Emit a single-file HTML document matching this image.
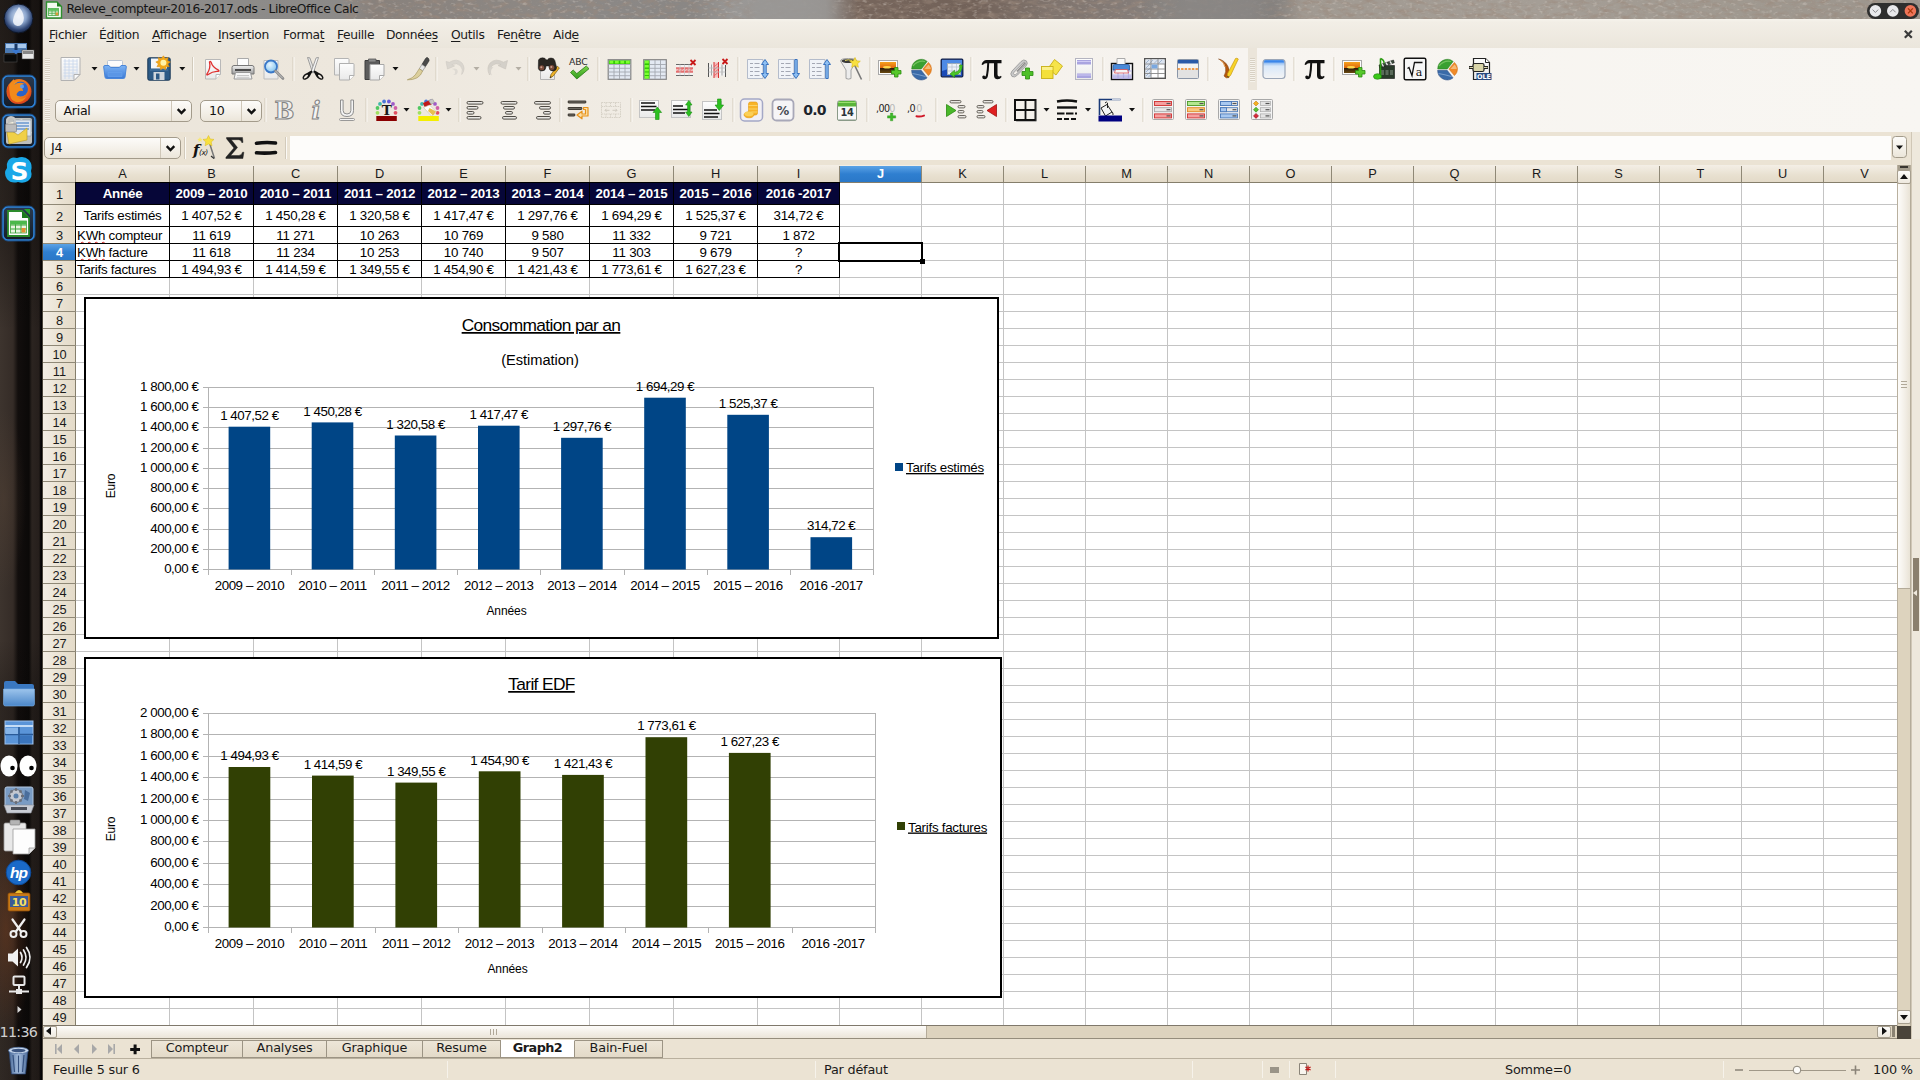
<!DOCTYPE html>
<html lang="fr"><head><meta charset="utf-8"><title>Releve_compteur-2016-2017.ods - LibreOffice Calc</title>
<style>
*{box-sizing:border-box;margin:0;padding:0}
html,body{width:1920px;height:1080px;overflow:hidden;background:#4a443a;}
body{position:relative;font-family:"DejaVu Sans","Liberation Sans",sans-serif;font-size:12px;color:#1a1a1a;}
.abs{position:absolute}
#dock{position:absolute;left:0;top:0;width:42px;border-right:0;height:1080px;background:linear-gradient(90deg,#2a211c 0,#1d1613 30px,#0a0807 36px,#050404 43px);}
#title{position:absolute;left:43px;top:0;width:1877px;height:19px;
 background:linear-gradient(90deg,#8f8d8b 0,#8c8a88 300px,#88817c 330px,#8c8783 470px,#8b8886 560px,#8a8785 650px,#9a9896 690px,#999795 760px,#77665c 800px,#726259 930px,#7f736c 1000px,#857d79 1090px,#86827f 1120px,#827e7b 1230px,#a19a92 1260px,#a59e96 1500px,#a09990 1700px,#9c958d 1877px);}
#title .t{position:absolute;left:23.5px;top:2px;font-size:12.3px;letter-spacing:-0.42px;color:#151515;white-space:nowrap}
#menubar{position:absolute;left:43px;top:19px;width:1877px;height:29px;background:linear-gradient(180deg,#f6f3ec 0,#f2eee6 3px,#ebe6dc 100%);}
#menubar span{position:absolute;top:9px;font-size:12.3px;letter-spacing:-0.35px;white-space:nowrap;color:#1a1a1a}
#menubar u{text-decoration:underline;text-underline-offset:1.5px;text-decoration-thickness:1px}
#tb{position:absolute;left:43px;top:48px;width:1877px;height:84px;background:linear-gradient(90deg,#ebe5da 0,#ede7dd 300px,#f2eee7 700px,#f7f4f0 1200px,#f8f6f2 1877px);}
#fbar{position:absolute;left:43px;top:132px;width:1877px;height:33px;background:#ebe3d4;}
.sep{position:absolute;width:1px;height:24px;background:#cfc7b8;box-shadow:1px 0 0 #faf8f4}
.dd{position:absolute;width:0;height:0;border-left:3.5px solid transparent;border-right:3.5px solid transparent;border-top:4px solid #1a1a1a}
.combo{position:absolute;height:25px;border:1px solid #a79f8f;border-radius:5px;background:linear-gradient(#fdfcfa,#f3efe7 60%,#ebe5d9);font-size:12.6px;letter-spacing:-0.3px;line-height:22px;padding-left:6px;color:#111}
.combo i{position:absolute;right:0;top:0;width:24px;height:23px;border-left:1px solid #cfc7b8}
.chev{position:absolute;width:7px;height:7px;border-right:2.6px solid #111;border-bottom:2.6px solid #111;transform:rotate(45deg)}


#grid{position:absolute;left:43px;top:165px;width:1854px;height:861px;background:#fff;overflow:hidden}
#grid .vl{position:absolute;top:0;width:1px;height:861px;background:#c4c4c4}
#grid .hl{position:absolute;left:0;height:1px;width:1854px;background:#c4c4c4}
#colhdr{position:absolute;left:0;top:0;width:1854px;height:18px;background:linear-gradient(#f4efe6,#e8e0d0 60%,#e3dac8);border-bottom:1px solid #857e6b}
#colhdr span{position:absolute;top:1px;height:16px;text-align:center;font-family:'Liberation Sans',sans-serif;font-size:12.8px;line-height:15px;color:#1a1a1a;border-right:1px solid #8f8876;}
#rowhdr{position:absolute;left:0;top:18px;width:33px;height:843px;background:linear-gradient(90deg,#f3eee4,#e9e1d1 60%,#e4dbc9);border-right:1px solid #857e6b}
#rowhdr span{position:absolute;left:0;width:33px;text-align:center;font-family:'Liberation Sans',sans-serif;font-size:12.8px;color:#1a1a1a;border-bottom:1px solid #8f8876;}
#corner{position:absolute;left:0;top:0;width:33px;height:18px;background:linear-gradient(#f4efe6,#e6decd);border-right:1px solid #9d9585;border-bottom:1px solid #9d9585}
.sel{background:linear-gradient(#5ba3e6,#2f7fd0 50%,#2a78c8)!important;color:#fff!important;font-weight:bold}
.c{position:absolute;font-family:"Liberation Sans",sans-serif;font-size:13.33px;letter-spacing:-0.25px;text-align:center;white-space:nowrap;color:#000;border:1px solid #000;overflow:hidden}
.c.h{background:#060638;color:#fff;font-weight:bold;letter-spacing:-0.2px}
.wavy{text-decoration:underline wavy #d02020;text-decoration-thickness:1px;text-underline-offset:1px;text-decoration-skip-ink:none}


#hsb{position:absolute;left:43px;top:1025px;width:1854px;height:14px;background:#ddd3be;border-top:1px solid #7f786b;border-bottom:1px solid #958d7c}
#hsb .th{position:absolute;left:14px;top:0;width:870px;height:12px;background:linear-gradient(#fdfcfa,#f3efe7 55%,#ebe5d9);border-right:1px solid #b4ab99}
#hsb .b{position:absolute;top:0px;width:14px;height:12px;border:1px solid #a69e8e;border-radius:2px;background:linear-gradient(#fdfcfa,#eee9de)}
.tri{position:absolute;width:0;height:0}
#vsb{position:absolute;left:1897px;top:165px;width:14px;height:861px;background:#ddd3be;border-left:1px solid #b9b09e;border-right:1px solid #b5ac9a}
#vsb .th{position:absolute;left:0;top:19px;width:12px;height:405px;background:linear-gradient(90deg,#fdfcfa,#f3efe7 55%,#e9e3d6);border-bottom:1px solid #b4ab99}
#vsb .b{position:absolute;left:-1px;width:14px;height:14px;border:1px solid #a69e8e;border-radius:2px;background:linear-gradient(#fdfcfa,#eee9de)}
#rpanel{position:absolute;left:1911px;top:132px;width:9px;height:927px;background:#eee8dc;border-left:1px solid #d0c7b6}
#tabbar{position:absolute;left:43px;top:1039px;width:1877px;height:20px;background:#ebe3d3;border-bottom:1px solid #b9b09e}
#tabbar .tab{position:absolute;top:1px;height:18px;border:1px solid #9c9484;border-left:none;background:linear-gradient(#ede6d8,#e3dac8);font-size:12.8px;letter-spacing:-0.15px;line-height:14px;text-align:center;color:#1a1a1a;white-space:nowrap}
#tabbar .tab.act{background:#fff;font-weight:bold;border-top-color:#fff;letter-spacing:-0.55px}
#tabbar .nav{position:absolute;top:3px;color:#a3a3a3;font-size:11px}
#status{position:absolute;left:43px;top:1059px;width:1877px;height:21px;background:#ebe3d3;font-size:12.8px;letter-spacing:-0.2px;color:#1a1a1a}
#status span{position:absolute;top:3px;white-space:nowrap}
#status .vs{position:absolute;top:2px;width:1px;height:17px;background:#f6f2ea}


#tbsvg{position:absolute;left:43px;top:48px}


#dock{background:radial-gradient(ellipse 26px 110px at 6px 930px,rgba(120,62,30,.5),rgba(120,62,30,0)),radial-gradient(ellipse 22px 90px at 4px 500px,rgba(90,70,55,.35),rgba(90,70,55,0)),linear-gradient(180deg,rgba(10,8,7,.55) 0,rgba(10,8,7,.35) 240px,rgba(0,0,0,0) 330px,rgba(0,0,0,0) 640px,rgba(10,8,7,.3) 700px,rgba(10,8,7,.25) 1080px),linear-gradient(90deg,#3d342e 0,#352c27 13px,#120e0d 18px,#0b0908 29px,#2b2420 32px,#261f1c 39px,#030202 41px,#000 43px)!important}
#docksvg{position:absolute;left:0;top:0}
</style></head>
<body>
<div id="dock"></div>
<div id="title"><svg class="abs" style="left:300px;top:0" width="1577" height="19" viewBox="0 0 1577 19" preserveAspectRatio="none"><filter id="tnoise" x="0" y="0" width="100%" height="100%"><feTurbulence type="fractalNoise" baseFrequency="0.09 0.22" numOctaves="3" seed="7"/><feColorMatrix type="matrix" values="0 0 0 0 0.33  0 0 0 0 0.25  0 0 0 0 0.2  2.4 0 0 0 -1.05"/></filter><filter id="tnoise2" x="0" y="0" width="100%" height="100%"><feTurbulence type="fractalNoise" baseFrequency="0.2 0.35" numOctaves="2" seed="23"/><feColorMatrix type="matrix" values="0 0 0 0 0.78  0 0 0 0 0.72  0 0 0 0 0.66  0 2.2 0 0 -1.25"/></filter><rect width="1577" height="19" filter="url(#tnoise)" opacity=".7"/><rect width="1577" height="19" filter="url(#tnoise2)" opacity=".5"/><defs><linearGradient id="tband" x1="0" y1="0" x2="1" y2="0"><stop offset="0" stop-color="#999795" stop-opacity="0"/><stop offset=".25" stop-color="#999795" stop-opacity=".9"/><stop offset=".75" stop-color="#999795" stop-opacity=".9"/><stop offset="1" stop-color="#999795" stop-opacity="0"/></linearGradient><linearGradient id="tband2" x1="0" y1="0" x2="1" y2="0"><stop offset="0" stop-color="#8a8785" stop-opacity="0"/><stop offset=".3" stop-color="#8a8785" stop-opacity=".85"/><stop offset=".7" stop-color="#8a8785" stop-opacity=".85"/><stop offset="1" stop-color="#8a8785" stop-opacity="0"/></linearGradient></defs><rect x="385" y="0" width="130" height="19" fill="url(#tband)"/><rect x="800" y="0" width="150" height="19" fill="url(#tband2)"/></svg><svg class="abs" style="left:2px;top:1px" width="18" height="18" viewBox="0 0 18 18"><path d="M1.500 1h10.500l4.500 4.500v11.500h-15z" fill="#f4faf0" stroke="#2f8f2f" stroke-width="1.400"/><path d="M12 1l4.500 4.500h-4.500z" fill="#1f7f1f"/><rect x="3.500" y="7.500" width="10" height="7" fill="#e6f4de" stroke="#48a848" stroke-width=".8"/><path d="M3.500 10h10M3.500 12.300h10M7 7.500v7M10.300 7.500v7" stroke="#48a848" stroke-width=".8"/><rect x="3.500" y="7.500" width="10" height="2.200" fill="#5cc05c"/><rect x="10.600" y="11.500" width="2.600" height="2.800" fill="#e09838"/></svg><div class="t">Releve_compteur-2016-2017.ods - LibreOffice Calc</div></div>
<div id="menubar"><span style="left:6px"><u>F</u>ichier</span><span style="left:56px">É<u>d</u>ition</span><span style="left:109px"><u>A</u>ffichage</span><span style="left:175px"><u>I</u>nsertion</span><span style="left:240px">Forma<u>t</u></span><span style="left:294px"><u>F</u>euille</span><span style="left:343px">Donnée<u>s</u></span><span style="left:408px"><u>O</u>utils</span><span style="left:454px">Fe<u>n</u>être</span><span style="left:510px">Aid<u>e</u></span><svg class="abs" style="left:1860px;top:10px" width="12" height="12" viewBox="0 0 12 12" aria-label="fermer"><path d="M1.800 1.800l7 7M8.800 1.800l-7 7" stroke="#3a3a3a" stroke-width="2.200"/></svg></div>
<svg class="abs" style="left:1864px;top:0" width="56" height="20" viewBox="1864 0 56 20"><rect x="1867" y="3" width="52" height="16" rx="8" fill="#2e2e2e"/><circle cx="1875.400" cy="10.900" r="5.800" fill="#e9e9ec"/><circle cx="1892.800" cy="10.900" r="5.800" fill="#e9e9ec"/><circle cx="1910.400" cy="10.900" r="5.800" fill="#ee7458"/><path d="M1872.600 9.600l2.800 2.900 2.800-2.900M1890 12.300l2.800-2.900 2.800 2.900" fill="none" stroke="#8a8a8e" stroke-width="1"/><path d="M1908 8.400l4.800 5M1912.800 8.400l-4.800 5" stroke="#a83408" stroke-width="1.300"/></svg>
<div id="tb"></div>
<div id="fbar"></div>
<div id="grid">
<div class="vl" style="left:126px"></div>
<div class="vl" style="left:210px"></div>
<div class="vl" style="left:294px"></div>
<div class="vl" style="left:378px"></div>
<div class="vl" style="left:462px"></div>
<div class="vl" style="left:546px"></div>
<div class="vl" style="left:630px"></div>
<div class="vl" style="left:714px"></div>
<div class="vl" style="left:796px"></div>
<div class="vl" style="left:878px"></div>
<div class="vl" style="left:960px"></div>
<div class="vl" style="left:1042px"></div>
<div class="vl" style="left:1124px"></div>
<div class="vl" style="left:1206px"></div>
<div class="vl" style="left:1288px"></div>
<div class="vl" style="left:1370px"></div>
<div class="vl" style="left:1452px"></div>
<div class="vl" style="left:1534px"></div>
<div class="vl" style="left:1616px"></div>
<div class="vl" style="left:1698px"></div>
<div class="vl" style="left:1780px"></div>
<div class="hl" style="top:39px"></div>
<div class="hl" style="top:61px"></div>
<div class="hl" style="top:78px"></div>
<div class="hl" style="top:95px"></div>
<div class="hl" style="top:112px"></div>
<div class="hl" style="top:129px"></div>
<div class="hl" style="top:146px"></div>
<div class="hl" style="top:163px"></div>
<div class="hl" style="top:180px"></div>
<div class="hl" style="top:197px"></div>
<div class="hl" style="top:214px"></div>
<div class="hl" style="top:231px"></div>
<div class="hl" style="top:248px"></div>
<div class="hl" style="top:265px"></div>
<div class="hl" style="top:282px"></div>
<div class="hl" style="top:299px"></div>
<div class="hl" style="top:316px"></div>
<div class="hl" style="top:333px"></div>
<div class="hl" style="top:350px"></div>
<div class="hl" style="top:367px"></div>
<div class="hl" style="top:384px"></div>
<div class="hl" style="top:401px"></div>
<div class="hl" style="top:418px"></div>
<div class="hl" style="top:435px"></div>
<div class="hl" style="top:452px"></div>
<div class="hl" style="top:469px"></div>
<div class="hl" style="top:486px"></div>
<div class="hl" style="top:503px"></div>
<div class="hl" style="top:520px"></div>
<div class="hl" style="top:537px"></div>
<div class="hl" style="top:554px"></div>
<div class="hl" style="top:571px"></div>
<div class="hl" style="top:588px"></div>
<div class="hl" style="top:605px"></div>
<div class="hl" style="top:622px"></div>
<div class="hl" style="top:639px"></div>
<div class="hl" style="top:656px"></div>
<div class="hl" style="top:673px"></div>
<div class="hl" style="top:690px"></div>
<div class="hl" style="top:707px"></div>
<div class="hl" style="top:724px"></div>
<div class="hl" style="top:741px"></div>
<div class="hl" style="top:758px"></div>
<div class="hl" style="top:775px"></div>
<div class="hl" style="top:792px"></div>
<div class="hl" style="top:809px"></div>
<div class="hl" style="top:826px"></div>
<div class="hl" style="top:843px"></div>
<div class="hl" style="top:860px"></div>
<div id="colhdr">
<span style="left:33px;width:94px">A</span>
<span style="left:127px;width:84px">B</span>
<span style="left:211px;width:84px">C</span>
<span style="left:295px;width:84px">D</span>
<span style="left:379px;width:84px">E</span>
<span style="left:463px;width:84px">F</span>
<span style="left:547px;width:84px">G</span>
<span style="left:631px;width:84px">H</span>
<span style="left:715px;width:82px">I</span>
<span class="sel" style="left:797px;width:82px">J</span>
<span style="left:879px;width:82px">K</span>
<span style="left:961px;width:82px">L</span>
<span style="left:1043px;width:82px">M</span>
<span style="left:1125px;width:82px">N</span>
<span style="left:1207px;width:82px">O</span>
<span style="left:1289px;width:82px">P</span>
<span style="left:1371px;width:82px">Q</span>
<span style="left:1453px;width:82px">R</span>
<span style="left:1535px;width:82px">S</span>
<span style="left:1617px;width:82px">T</span>
<span style="left:1699px;width:82px">U</span>
<span style="left:1781px;width:82px">V</span>
</div><div id="rowhdr">
<span style="top:0px;height:22px;line-height:23px">1</span>
<span style="top:22px;height:22px;line-height:23px">2</span>
<span style="top:44px;height:17px;line-height:18px">3</span>
<span class="sel" style="top:61px;height:17px;line-height:18px">4</span>
<span style="top:78px;height:17px;line-height:18px">5</span>
<span style="top:95px;height:17px;line-height:18px">6</span>
<span style="top:112px;height:17px;line-height:18px">7</span>
<span style="top:129px;height:17px;line-height:18px">8</span>
<span style="top:146px;height:17px;line-height:18px">9</span>
<span style="top:163px;height:17px;line-height:18px">10</span>
<span style="top:180px;height:17px;line-height:18px">11</span>
<span style="top:197px;height:17px;line-height:18px">12</span>
<span style="top:214px;height:17px;line-height:18px">13</span>
<span style="top:231px;height:17px;line-height:18px">14</span>
<span style="top:248px;height:17px;line-height:18px">15</span>
<span style="top:265px;height:17px;line-height:18px">16</span>
<span style="top:282px;height:17px;line-height:18px">17</span>
<span style="top:299px;height:17px;line-height:18px">18</span>
<span style="top:316px;height:17px;line-height:18px">19</span>
<span style="top:333px;height:17px;line-height:18px">20</span>
<span style="top:350px;height:17px;line-height:18px">21</span>
<span style="top:367px;height:17px;line-height:18px">22</span>
<span style="top:384px;height:17px;line-height:18px">23</span>
<span style="top:401px;height:17px;line-height:18px">24</span>
<span style="top:418px;height:17px;line-height:18px">25</span>
<span style="top:435px;height:17px;line-height:18px">26</span>
<span style="top:452px;height:17px;line-height:18px">27</span>
<span style="top:469px;height:17px;line-height:18px">28</span>
<span style="top:486px;height:17px;line-height:18px">29</span>
<span style="top:503px;height:17px;line-height:18px">30</span>
<span style="top:520px;height:17px;line-height:18px">31</span>
<span style="top:537px;height:17px;line-height:18px">32</span>
<span style="top:554px;height:17px;line-height:18px">33</span>
<span style="top:571px;height:17px;line-height:18px">34</span>
<span style="top:588px;height:17px;line-height:18px">35</span>
<span style="top:605px;height:17px;line-height:18px">36</span>
<span style="top:622px;height:17px;line-height:18px">37</span>
<span style="top:639px;height:17px;line-height:18px">38</span>
<span style="top:656px;height:17px;line-height:18px">39</span>
<span style="top:673px;height:17px;line-height:18px">40</span>
<span style="top:690px;height:17px;line-height:18px">41</span>
<span style="top:707px;height:17px;line-height:18px">42</span>
<span style="top:724px;height:17px;line-height:18px">43</span>
<span style="top:741px;height:17px;line-height:18px">44</span>
<span style="top:758px;height:17px;line-height:18px">45</span>
<span style="top:775px;height:17px;line-height:18px">46</span>
<span style="top:792px;height:17px;line-height:18px">47</span>
<span style="top:809px;height:17px;line-height:18px">48</span>
<span style="top:826px;height:17px;line-height:18px">49</span>
</div><div id="corner"></div>
<div class="c h" style="left:32px;top:17px;width:95px;height:23px;line-height:21px">Année</div>
<div class="c h" style="left:126px;top:17px;width:85px;height:23px;line-height:21px">2009 – 2010</div>
<div class="c h" style="left:210px;top:17px;width:85px;height:23px;line-height:21px">2010 – 2011</div>
<div class="c h" style="left:294px;top:17px;width:85px;height:23px;line-height:21px">2011 – 2012</div>
<div class="c h" style="left:378px;top:17px;width:85px;height:23px;line-height:21px">2012 – 2013</div>
<div class="c h" style="left:462px;top:17px;width:85px;height:23px;line-height:21px">2013 – 2014</div>
<div class="c h" style="left:546px;top:17px;width:85px;height:23px;line-height:21px">2014 – 2015</div>
<div class="c h" style="left:630px;top:17px;width:85px;height:23px;line-height:21px">2015 – 2016</div>
<div class="c h" style="left:714px;top:17px;width:83px;height:23px;line-height:21px">2016 -2017</div>
<div class="c" style="left:32px;top:39px;width:95px;height:23px;line-height:21px">Tarifs estimés</div>
<div class="c" style="left:126px;top:39px;width:85px;height:23px;line-height:21px">1 407,52 €</div>
<div class="c" style="left:210px;top:39px;width:85px;height:23px;line-height:21px">1 450,28 €</div>
<div class="c" style="left:294px;top:39px;width:85px;height:23px;line-height:21px">1 320,58 €</div>
<div class="c" style="left:378px;top:39px;width:85px;height:23px;line-height:21px">1 417,47 €</div>
<div class="c" style="left:462px;top:39px;width:85px;height:23px;line-height:21px">1 297,76 €</div>
<div class="c" style="left:546px;top:39px;width:85px;height:23px;line-height:21px">1 694,29 €</div>
<div class="c" style="left:630px;top:39px;width:85px;height:23px;line-height:21px">1 525,37 €</div>
<div class="c" style="left:714px;top:39px;width:83px;height:23px;line-height:21px">314,72 €</div>
<div class="c" style="left:32px;top:61px;width:95px;height:18px;line-height:18px;text-align:left;padding-left:1px"><span class="wavy">KWh</span> compteur</div>
<div class="c" style="left:126px;top:61px;width:85px;height:18px;line-height:18px">11 619</div>
<div class="c" style="left:210px;top:61px;width:85px;height:18px;line-height:18px">11 271</div>
<div class="c" style="left:294px;top:61px;width:85px;height:18px;line-height:18px">10 263</div>
<div class="c" style="left:378px;top:61px;width:85px;height:18px;line-height:18px">10 769</div>
<div class="c" style="left:462px;top:61px;width:85px;height:18px;line-height:18px">9 580</div>
<div class="c" style="left:546px;top:61px;width:85px;height:18px;line-height:18px">11 332</div>
<div class="c" style="left:630px;top:61px;width:85px;height:18px;line-height:18px">9 721</div>
<div class="c" style="left:714px;top:61px;width:83px;height:18px;line-height:18px">1 872</div>
<div class="c" style="left:32px;top:78px;width:95px;height:18px;line-height:18px;text-align:left;padding-left:1px"><span class="wavy">KWh</span> facture</div>
<div class="c" style="left:126px;top:78px;width:85px;height:18px;line-height:18px">11 618</div>
<div class="c" style="left:210px;top:78px;width:85px;height:18px;line-height:18px">11 234</div>
<div class="c" style="left:294px;top:78px;width:85px;height:18px;line-height:18px">10 253</div>
<div class="c" style="left:378px;top:78px;width:85px;height:18px;line-height:18px">10 740</div>
<div class="c" style="left:462px;top:78px;width:85px;height:18px;line-height:18px">9 507</div>
<div class="c" style="left:546px;top:78px;width:85px;height:18px;line-height:18px">11 303</div>
<div class="c" style="left:630px;top:78px;width:85px;height:18px;line-height:18px">9 679</div>
<div class="c" style="left:714px;top:78px;width:83px;height:18px;line-height:18px">?</div>
<div class="c" style="left:32px;top:95px;width:95px;height:18px;line-height:18px;text-align:left;padding-left:1px">Tarifs factures</div>
<div class="c" style="left:126px;top:95px;width:85px;height:18px;line-height:18px">1 494,93 €</div>
<div class="c" style="left:210px;top:95px;width:85px;height:18px;line-height:18px">1 414,59 €</div>
<div class="c" style="left:294px;top:95px;width:85px;height:18px;line-height:18px">1 349,55 €</div>
<div class="c" style="left:378px;top:95px;width:85px;height:18px;line-height:18px">1 454,90 €</div>
<div class="c" style="left:462px;top:95px;width:85px;height:18px;line-height:18px">1 421,43 €</div>
<div class="c" style="left:546px;top:95px;width:85px;height:18px;line-height:18px">1 773,61 €</div>
<div class="c" style="left:630px;top:95px;width:85px;height:18px;line-height:18px">1 627,23 €</div>
<div class="c" style="left:714px;top:95px;width:83px;height:18px;line-height:18px">?</div>
<div class="abs" style="left:795px;top:77px;width:85px;height:20px;border:2px solid #000"></div>
<div class="abs" style="left:877px;top:94px;width:5px;height:5px;background:#000"></div>
</div>
<svg class="abs" style="left:84px;top:297px" width="915" height="342" viewBox="84 297 915 342" font-family="Liberation Sans, sans-serif" fill="#000">
<rect x="85" y="298" width="913" height="340" fill="#fff" stroke="#000" stroke-width="2"/>
<path d="M203 569.5H873.5" stroke="#b3b3b3" stroke-width="1" fill="none"/>
<text x="198.5" y="573.3" font-size="13.33" text-anchor="end" letter-spacing="-0.45">0,00 €</text>
<path d="M203 549.5H873.5" stroke="#b3b3b3" stroke-width="1" fill="none"/>
<text x="198.5" y="553.3" font-size="13.33" text-anchor="end" letter-spacing="-0.45">200,00 €</text>
<path d="M203 529.5H873.5" stroke="#b3b3b3" stroke-width="1" fill="none"/>
<text x="198.5" y="533.3" font-size="13.33" text-anchor="end" letter-spacing="-0.45">400,00 €</text>
<path d="M203 508.5H873.5" stroke="#b3b3b3" stroke-width="1" fill="none"/>
<text x="198.5" y="512.3" font-size="13.33" text-anchor="end" letter-spacing="-0.45">600,00 €</text>
<path d="M203 488.5H873.5" stroke="#b3b3b3" stroke-width="1" fill="none"/>
<text x="198.5" y="492.3" font-size="13.33" text-anchor="end" letter-spacing="-0.45">800,00 €</text>
<path d="M203 468.5H873.5" stroke="#b3b3b3" stroke-width="1" fill="none"/>
<text x="198.5" y="472.3" font-size="13.33" text-anchor="end" letter-spacing="-0.45">1 000,00 €</text>
<path d="M203 448.5H873.5" stroke="#b3b3b3" stroke-width="1" fill="none"/>
<text x="198.5" y="452.3" font-size="13.33" text-anchor="end" letter-spacing="-0.45">1 200,00 €</text>
<path d="M203 427.5H873.5" stroke="#b3b3b3" stroke-width="1" fill="none"/>
<text x="198.5" y="431.3" font-size="13.33" text-anchor="end" letter-spacing="-0.45">1 400,00 €</text>
<path d="M203 407.5H873.5" stroke="#b3b3b3" stroke-width="1" fill="none"/>
<text x="198.5" y="411.3" font-size="13.33" text-anchor="end" letter-spacing="-0.45">1 600,00 €</text>
<path d="M203 387.5H873.5" stroke="#b3b3b3" stroke-width="1" fill="none"/>
<text x="198.5" y="391.3" font-size="13.33" text-anchor="end" letter-spacing="-0.45">1 800,00 €</text>
<path d="M208.5 387V575M873.5 387V575" stroke="#b3b3b3" fill="none"/>
<path d="M291.5 569v6" stroke="#b3b3b3" fill="none"/>
<path d="M374.5 569v6" stroke="#b3b3b3" fill="none"/>
<path d="M457.5 569v6" stroke="#b3b3b3" fill="none"/>
<path d="M540.5 569v6" stroke="#b3b3b3" fill="none"/>
<path d="M624.5 569v6" stroke="#b3b3b3" fill="none"/>
<path d="M707.5 569v6" stroke="#b3b3b3" fill="none"/>
<path d="M790.5 569v6" stroke="#b3b3b3" fill="none"/>
<rect x="228.6" y="426.7" width="41.6" height="142.8" fill="#004586"/>
<text x="249.4" y="419.9" font-size="13.33" text-anchor="middle" letter-spacing="-0.45">1 407,52 €</text>
<text x="249.4" y="590" font-size="13.33" text-anchor="middle" letter-spacing="-0.42">2009 – 2010</text>
<rect x="311.7" y="422.4" width="41.6" height="147.1" fill="#004586"/>
<text x="332.5" y="415.6" font-size="13.33" text-anchor="middle" letter-spacing="-0.45">1 450,28 €</text>
<text x="332.5" y="590" font-size="13.33" text-anchor="middle" letter-spacing="-0.42">2010 – 2011</text>
<rect x="394.8" y="435.5" width="41.6" height="134.0" fill="#004586"/>
<text x="415.6" y="428.7" font-size="13.33" text-anchor="middle" letter-spacing="-0.45">1 320,58 €</text>
<text x="415.6" y="590" font-size="13.33" text-anchor="middle" letter-spacing="-0.42">2011 – 2012</text>
<rect x="478.0" y="425.7" width="41.6" height="143.8" fill="#004586"/>
<text x="498.7" y="418.9" font-size="13.33" text-anchor="middle" letter-spacing="-0.45">1 417,47 €</text>
<text x="498.7" y="590" font-size="13.33" text-anchor="middle" letter-spacing="-0.42">2012 – 2013</text>
<rect x="561.1" y="437.8" width="41.6" height="131.7" fill="#004586"/>
<text x="581.9" y="431.0" font-size="13.33" text-anchor="middle" letter-spacing="-0.45">1 297,76 €</text>
<text x="581.9" y="590" font-size="13.33" text-anchor="middle" letter-spacing="-0.42">2013 – 2014</text>
<rect x="644.2" y="397.7" width="41.6" height="171.8" fill="#004586"/>
<text x="665.0" y="390.9" font-size="13.33" text-anchor="middle" letter-spacing="-0.45">1 694,29 €</text>
<text x="665.0" y="590" font-size="13.33" text-anchor="middle" letter-spacing="-0.42">2014 – 2015</text>
<rect x="727.3" y="414.8" width="41.6" height="154.7" fill="#004586"/>
<text x="748.1" y="408.0" font-size="13.33" text-anchor="middle" letter-spacing="-0.45">1 525,37 €</text>
<text x="748.1" y="590" font-size="13.33" text-anchor="middle" letter-spacing="-0.42">2015 – 2016</text>
<rect x="810.5" y="537.2" width="41.6" height="32.3" fill="#004586"/>
<text x="831.2" y="530.4" font-size="13.33" text-anchor="middle" letter-spacing="-0.45">314,72 €</text>
<text x="831.2" y="590" font-size="13.33" text-anchor="middle" letter-spacing="-0.42">2016 -2017</text>
<text x="541" y="331" font-size="17.33" text-anchor="middle" letter-spacing="-0.62" text-decoration="underline">Consommation par an</text>
<text x="540" y="365" font-size="14.67" text-anchor="middle" letter-spacing="-0.05">(Estimation)</text>
<text x="506.5" y="615" font-size="12" text-anchor="middle" letter-spacing="-0.1">Années</text>
<text transform="translate(115 486) rotate(-90)" font-size="12" text-anchor="middle" letter-spacing="-0.2">Euro</text>
<rect x="895" y="463" width="8" height="8" fill="#004586"/>
<text x="906" y="472" font-size="13.33" letter-spacing="-0.26" text-decoration="underline">Tarifs estimés</text>
</svg>
<svg class="abs" style="left:84px;top:657px" width="918" height="341" viewBox="84 657 918 341" font-family="Liberation Sans, sans-serif" fill="#000">
<rect x="85" y="658" width="916" height="339" fill="#fff" stroke="#000" stroke-width="2"/>
<path d="M203 927.5H875.5" stroke="#b3b3b3" stroke-width="1" fill="none"/>
<text x="198.5" y="931.3" font-size="13.33" text-anchor="end" letter-spacing="-0.45">0,00 €</text>
<path d="M203 906.5H875.5" stroke="#b3b3b3" stroke-width="1" fill="none"/>
<text x="198.5" y="910.3" font-size="13.33" text-anchor="end" letter-spacing="-0.45">200,00 €</text>
<path d="M203 884.5H875.5" stroke="#b3b3b3" stroke-width="1" fill="none"/>
<text x="198.5" y="888.3" font-size="13.33" text-anchor="end" letter-spacing="-0.45">400,00 €</text>
<path d="M203 863.5H875.5" stroke="#b3b3b3" stroke-width="1" fill="none"/>
<text x="198.5" y="867.3" font-size="13.33" text-anchor="end" letter-spacing="-0.45">600,00 €</text>
<path d="M203 841.5H875.5" stroke="#b3b3b3" stroke-width="1" fill="none"/>
<text x="198.5" y="845.3" font-size="13.33" text-anchor="end" letter-spacing="-0.45">800,00 €</text>
<path d="M203 820.5H875.5" stroke="#b3b3b3" stroke-width="1" fill="none"/>
<text x="198.5" y="824.3" font-size="13.33" text-anchor="end" letter-spacing="-0.45">1 000,00 €</text>
<path d="M203 799.5H875.5" stroke="#b3b3b3" stroke-width="1" fill="none"/>
<text x="198.5" y="803.3" font-size="13.33" text-anchor="end" letter-spacing="-0.45">1 200,00 €</text>
<path d="M203 777.5H875.5" stroke="#b3b3b3" stroke-width="1" fill="none"/>
<text x="198.5" y="781.3" font-size="13.33" text-anchor="end" letter-spacing="-0.45">1 400,00 €</text>
<path d="M203 756.5H875.5" stroke="#b3b3b3" stroke-width="1" fill="none"/>
<text x="198.5" y="760.3" font-size="13.33" text-anchor="end" letter-spacing="-0.45">1 600,00 €</text>
<path d="M203 734.5H875.5" stroke="#b3b3b3" stroke-width="1" fill="none"/>
<text x="198.5" y="738.3" font-size="13.33" text-anchor="end" letter-spacing="-0.45">1 800,00 €</text>
<path d="M203 713.5H875.5" stroke="#b3b3b3" stroke-width="1" fill="none"/>
<text x="198.5" y="717.3" font-size="13.33" text-anchor="end" letter-spacing="-0.45">2 000,00 €</text>
<path d="M208.5 713V933M875.5 713V933" stroke="#b3b3b3" fill="none"/>
<path d="M291.5 927v6" stroke="#b3b3b3" fill="none"/>
<path d="M375.5 927v6" stroke="#b3b3b3" fill="none"/>
<path d="M458.5 927v6" stroke="#b3b3b3" fill="none"/>
<path d="M542.5 927v6" stroke="#b3b3b3" fill="none"/>
<path d="M625.5 927v6" stroke="#b3b3b3" fill="none"/>
<path d="M708.5 927v6" stroke="#b3b3b3" fill="none"/>
<path d="M792.5 927v6" stroke="#b3b3b3" fill="none"/>
<rect x="228.6" y="767.0" width="41.7" height="160.5" fill="#314004"/>
<text x="249.5" y="760.2" font-size="13.33" text-anchor="middle" letter-spacing="-0.45">1 494,93 €</text>
<text x="249.5" y="948" font-size="13.33" text-anchor="middle" letter-spacing="-0.42">2009 – 2010</text>
<rect x="312.0" y="775.6" width="41.7" height="151.9" fill="#314004"/>
<text x="332.9" y="768.8" font-size="13.33" text-anchor="middle" letter-spacing="-0.45">1 414,59 €</text>
<text x="332.9" y="948" font-size="13.33" text-anchor="middle" letter-spacing="-0.42">2010 – 2011</text>
<rect x="395.4" y="782.6" width="41.7" height="144.9" fill="#314004"/>
<text x="416.2" y="775.8" font-size="13.33" text-anchor="middle" letter-spacing="-0.45">1 349,55 €</text>
<text x="416.2" y="948" font-size="13.33" text-anchor="middle" letter-spacing="-0.42">2011 – 2012</text>
<rect x="478.8" y="771.3" width="41.7" height="156.2" fill="#314004"/>
<text x="499.6" y="764.5" font-size="13.33" text-anchor="middle" letter-spacing="-0.45">1 454,90 €</text>
<text x="499.6" y="948" font-size="13.33" text-anchor="middle" letter-spacing="-0.42">2012 – 2013</text>
<rect x="562.1" y="774.9" width="41.7" height="152.6" fill="#314004"/>
<text x="583.0" y="768.1" font-size="13.33" text-anchor="middle" letter-spacing="-0.45">1 421,43 €</text>
<text x="583.0" y="948" font-size="13.33" text-anchor="middle" letter-spacing="-0.42">2013 – 2014</text>
<rect x="645.5" y="737.2" width="41.7" height="190.3" fill="#314004"/>
<text x="666.4" y="730.4" font-size="13.33" text-anchor="middle" letter-spacing="-0.45">1 773,61 €</text>
<text x="666.4" y="948" font-size="13.33" text-anchor="middle" letter-spacing="-0.42">2014 – 2015</text>
<rect x="728.9" y="752.9" width="41.7" height="174.6" fill="#314004"/>
<text x="749.7" y="746.1" font-size="13.33" text-anchor="middle" letter-spacing="-0.45">1 627,23 €</text>
<text x="749.7" y="948" font-size="13.33" text-anchor="middle" letter-spacing="-0.42">2015 – 2016</text>
<text x="833.1" y="948" font-size="13.33" text-anchor="middle" letter-spacing="-0.42">2016 -2017</text>
<text x="541.5" y="690" font-size="17.33" text-anchor="middle" letter-spacing="-0.62" text-decoration="underline">Tarif EDF</text>
<text x="507.5" y="973" font-size="12" text-anchor="middle" letter-spacing="-0.1">Années</text>
<text transform="translate(115 829) rotate(-90)" font-size="12" text-anchor="middle" letter-spacing="-0.2">Euro</text>
<rect x="897" y="822" width="8" height="8" fill="#314004"/>
<text x="908" y="831.5" font-size="13.33" letter-spacing="-0.26" text-decoration="underline">Tarifs factures</text>
</svg>
<div id="hsb"><div class="th"></div><div class="b" style="left:0"></div><div class="tri" style="left:3px;top:1px;border-top:4px solid transparent;border-bottom:4px solid transparent;border-right:5px solid #111"></div><div class="abs" style="left:447px;top:3px;width:7px;height:6px;border-left:1px solid #b0a898;border-right:1px solid #b0a898"><div class="abs" style="left:2px;top:0;width:1px;height:6px;background:#b0a898"></div></div><div class="b" style="left:1834px"></div><div class="tri" style="left:1839px;top:1px;border-top:4px solid transparent;border-bottom:4px solid transparent;border-left:5px solid #111"></div><div class="abs" style="left:1849px;top:0;width:3px;height:11px;background:#8a8272"></div></div>
<div id="vsb"><div class="abs" style="left:0;top:0;width:12px;height:5px;background:#a59d8d"></div><div class="abs" style="left:2px;top:1px;width:8px;height:2px;background:#3a3630"></div><div class="th"></div><div class="b" style="top:5px"></div><div class="tri" style="left:2px;top:9px;border-left:4px solid transparent;border-right:4px solid transparent;border-bottom:5px solid #111"></div><div class="abs" style="left:3px;top:216px;width:6px;height:7px;border-top:1px solid #b0a898;border-bottom:1px solid #b0a898"><div class="abs" style="left:0;top:2px;width:6px;height:1px;background:#b0a898"></div></div><div class="b" style="top:845px"></div><div class="tri" style="left:2px;top:850px;border-left:4px solid transparent;border-right:4px solid transparent;border-top:5px solid #111"></div></div>
<div id="rpanel"><div class="abs" style="left:1px;top:426px;width:6px;height:73px;background:#8a7f6d"></div><div class="tri" style="left:1px;top:458px;border-top:3px solid transparent;border-bottom:3px solid transparent;border-right:4px solid #efe9dd"></div></div>
<div id="tabbar"><svg class="abs" style="left:10px;top:3px" width="100" height="14" viewBox="0 0 100 14"><g fill="#a8a8a8"><path d="M2 2h1.6v10H2zM9 2v10L4 7z"/><path d="M26 2v10L21 7z"/><path d="M39 2v10L44 7z"/><path d="M55 2v10l5-5zM60.4 2H62v10h-1.6z"/></g><path d="M80.600 2.500h3v3.400h3.400v3h-3.400v3.400h-3V8.900h-3.400v-3h3.400z" fill="#111"/></svg><div class="abs" style="left:108px;top:1px;width:1px;height:18px;background:#9c9484"></div><div class="tab" style="left:109px;width:91px">Compteur</div><div class="tab" style="left:200px;width:84px">Analyses</div><div class="tab" style="left:284px;width:96px">Graphique</div><div class="tab" style="left:380px;width:78px">Resume</div><div class="tab act" style="left:458px;width:74px">Graph2</div><div class="tab" style="left:532px;width:88px">Bain-Fuel</div></div>
<div id="status"><span style="left:10px">Feuille 5 sur 6</span><span style="left:781px">Par défaut</span><span style="left:1462px">Somme=0</span><span style="left:1830px">100 %</span><div class="vs" style="left:404px"></div><div class="vs" style="left:772px"></div><div class="vs" style="left:1149px"></div><div class="vs" style="left:1219px"></div><div class="vs" style="left:1246px"></div><div class="vs" style="left:1292px"></div><div class="vs" style="left:1680px"></div><div class="abs" style="left:1227px;top:8px;width:9px;height:6px;background:#9a9488"></div><svg class="abs" style="left:1255px;top:3px" width="16" height="14" viewBox="0 0 16 14"><path d="M1.5 1.5h7v11h-7z" fill="#f8f5ee" stroke="#8a8478"/><path d="M10 3.5v6M7.4 5l5.2 3M7.4 8l5.2-3" stroke="#c01818" stroke-width="1.2"/></svg><svg class="abs" style="left:1690px;top:3px" width="135" height="16" viewBox="0 0 135 16"><path d="M2 8h8M118 8h9M122.5 3.5v9" stroke="#8a8478" stroke-width="1.6"/><path d="M16 8.500h97" stroke="#a09888" stroke-width="1"/><circle cx="64" cy="8" r="3.8" fill="#fcfbf8" stroke="#8a8478"/></svg></div>
<svg id="tbsvg" width="1877" height="117" viewBox="43 48 1877 117">
<defs>
<linearGradient id="gPage" x1="0" y1="0" x2="0" y2="1"><stop offset="0" stop-color="#fdfdfd"/><stop offset="1" stop-color="#e9e9e9"/></linearGradient>
<linearGradient id="gBlue" x1="0" y1="0" x2="0" y2="1"><stop offset="0" stop-color="#7db4f5"/><stop offset="1" stop-color="#3b7ad6"/></linearGradient>
<linearGradient id="gGrey" x1="0" y1="0" x2="0" y2="1"><stop offset="0" stop-color="#f2f2f2"/><stop offset="1" stop-color="#9c9c9c"/></linearGradient>
<linearGradient id="gGreen" x1="0" y1="0" x2="0" y2="1"><stop offset="0" stop-color="#7ad64a"/><stop offset="1" stop-color="#2f9a1c"/></linearGradient>
<linearGradient id="gSun" x1="0" y1="0" x2="0" y2="1"><stop offset="0" stop-color="#f6a21c"/><stop offset="0.5" stop-color="#e06a10"/><stop offset="0.55" stop-color="#2a1a08"/><stop offset="1" stop-color="#6b4a10"/></linearGradient>
<linearGradient id="gBtn" x1="0" y1="0" x2="0" y2="1"><stop offset="0" stop-color="#fdfcfa"/><stop offset="0.6" stop-color="#f3efe7"/><stop offset="1" stop-color="#ebe5d9"/></linearGradient>
<linearGradient id="gWin" x1="0" y1="0" x2="0" y2="1"><stop offset="0" stop-color="#4a90e8"/><stop offset="0.35" stop-color="#d8e8fa"/><stop offset="1" stop-color="#f4f4f4"/></linearGradient>
<radialGradient id="gLens" cx="0.4" cy="0.35" r="0.7"><stop offset="0" stop-color="#e8f6ff"/><stop offset="1" stop-color="#7cc0ee"/></radialGradient>
</defs>
<rect x="1248" y="48" width="9" height="42" fill="#ebe5da"/>
<path d="M45 58.5h5" stroke="#d8d1c4" stroke-width="1"/><path d="M45 59.5h5" stroke="#f6f3ec" stroke-width="1"/><path d="M45 60.5h5" stroke="#d8d1c4" stroke-width="1"/><path d="M45 61.5h5" stroke="#f6f3ec" stroke-width="1"/><path d="M45 62.5h5" stroke="#d8d1c4" stroke-width="1"/><path d="M45 63.5h5" stroke="#f6f3ec" stroke-width="1"/><path d="M45 64.5h5" stroke="#d8d1c4" stroke-width="1"/><path d="M45 65.5h5" stroke="#f6f3ec" stroke-width="1"/><path d="M45 66.5h5" stroke="#d8d1c4" stroke-width="1"/><path d="M45 67.5h5" stroke="#f6f3ec" stroke-width="1"/><path d="M45 68.5h5" stroke="#d8d1c4" stroke-width="1"/><path d="M45 69.5h5" stroke="#f6f3ec" stroke-width="1"/><path d="M45 70.5h5" stroke="#d8d1c4" stroke-width="1"/><path d="M45 71.5h5" stroke="#f6f3ec" stroke-width="1"/><path d="M45 72.5h5" stroke="#d8d1c4" stroke-width="1"/><path d="M45 73.5h5" stroke="#f6f3ec" stroke-width="1"/><path d="M45 74.5h5" stroke="#d8d1c4" stroke-width="1"/><path d="M45 75.5h5" stroke="#f6f3ec" stroke-width="1"/><path d="M45 76.5h5" stroke="#d8d1c4" stroke-width="1"/><path d="M45 77.5h5" stroke="#f6f3ec" stroke-width="1"/><path d="M45 78.5h5" stroke="#d8d1c4" stroke-width="1"/><path d="M45 79.5h5" stroke="#f6f3ec" stroke-width="1"/><path d="M45 80.5h5" stroke="#d8d1c4" stroke-width="1"/><path d="M45 81.5h5" stroke="#f6f3ec" stroke-width="1"/>
<path d="M45 99.5h5" stroke="#d8d1c4" stroke-width="1"/><path d="M45 100.5h5" stroke="#f6f3ec" stroke-width="1"/><path d="M45 101.5h5" stroke="#d8d1c4" stroke-width="1"/><path d="M45 102.5h5" stroke="#f6f3ec" stroke-width="1"/><path d="M45 103.5h5" stroke="#d8d1c4" stroke-width="1"/><path d="M45 104.5h5" stroke="#f6f3ec" stroke-width="1"/><path d="M45 105.5h5" stroke="#d8d1c4" stroke-width="1"/><path d="M45 106.5h5" stroke="#f6f3ec" stroke-width="1"/><path d="M45 107.5h5" stroke="#d8d1c4" stroke-width="1"/><path d="M45 108.5h5" stroke="#f6f3ec" stroke-width="1"/><path d="M45 109.5h5" stroke="#d8d1c4" stroke-width="1"/><path d="M45 110.5h5" stroke="#f6f3ec" stroke-width="1"/><path d="M45 111.5h5" stroke="#d8d1c4" stroke-width="1"/><path d="M45 112.5h5" stroke="#f6f3ec" stroke-width="1"/><path d="M45 113.5h5" stroke="#d8d1c4" stroke-width="1"/><path d="M45 114.5h5" stroke="#f6f3ec" stroke-width="1"/><path d="M45 115.5h5" stroke="#d8d1c4" stroke-width="1"/><path d="M45 116.5h5" stroke="#f6f3ec" stroke-width="1"/><path d="M45 117.5h5" stroke="#d8d1c4" stroke-width="1"/><path d="M45 118.5h5" stroke="#f6f3ec" stroke-width="1"/><path d="M45 119.5h5" stroke="#d8d1c4" stroke-width="1"/><path d="M45 120.5h5" stroke="#f6f3ec" stroke-width="1"/><path d="M45 121.5h5" stroke="#d8d1c4" stroke-width="1"/><path d="M45 122.5h5" stroke="#f6f3ec" stroke-width="1"/>
<path d="M1250 58.5h5" stroke="#d8d1c4" stroke-width="1"/><path d="M1250 59.5h5" stroke="#f6f3ec" stroke-width="1"/><path d="M1250 60.5h5" stroke="#d8d1c4" stroke-width="1"/><path d="M1250 61.5h5" stroke="#f6f3ec" stroke-width="1"/><path d="M1250 62.5h5" stroke="#d8d1c4" stroke-width="1"/><path d="M1250 63.5h5" stroke="#f6f3ec" stroke-width="1"/><path d="M1250 64.5h5" stroke="#d8d1c4" stroke-width="1"/><path d="M1250 65.5h5" stroke="#f6f3ec" stroke-width="1"/><path d="M1250 66.5h5" stroke="#d8d1c4" stroke-width="1"/><path d="M1250 67.5h5" stroke="#f6f3ec" stroke-width="1"/><path d="M1250 68.5h5" stroke="#d8d1c4" stroke-width="1"/><path d="M1250 69.5h5" stroke="#f6f3ec" stroke-width="1"/><path d="M1250 70.5h5" stroke="#d8d1c4" stroke-width="1"/><path d="M1250 71.5h5" stroke="#f6f3ec" stroke-width="1"/><path d="M1250 72.5h5" stroke="#d8d1c4" stroke-width="1"/><path d="M1250 73.5h5" stroke="#f6f3ec" stroke-width="1"/><path d="M1250 74.5h5" stroke="#d8d1c4" stroke-width="1"/><path d="M1250 75.5h5" stroke="#f6f3ec" stroke-width="1"/><path d="M1250 76.5h5" stroke="#d8d1c4" stroke-width="1"/><path d="M1250 77.5h5" stroke="#f6f3ec" stroke-width="1"/><path d="M1250 78.5h5" stroke="#d8d1c4" stroke-width="1"/><path d="M1250 79.5h5" stroke="#f6f3ec" stroke-width="1"/><path d="M1250 80.5h5" stroke="#d8d1c4" stroke-width="1"/><path d="M1250 81.5h5" stroke="#f6f3ec" stroke-width="1"/>
<path d="M192.5 57v24" stroke="#d2cabb" stroke-width="1"/><path d="M193.5 57v24" stroke="#fbf9f5" stroke-width="1"/>
<path d="M293 57v24" stroke="#d2cabb" stroke-width="1"/><path d="M294 57v24" stroke="#fbf9f5" stroke-width="1"/>
<path d="M436 57v24" stroke="#d2cabb" stroke-width="1"/><path d="M437 57v24" stroke="#fbf9f5" stroke-width="1"/>
<path d="M528 57v24" stroke="#d2cabb" stroke-width="1"/><path d="M529 57v24" stroke="#fbf9f5" stroke-width="1"/>
<path d="M598 57v24" stroke="#d2cabb" stroke-width="1"/><path d="M599 57v24" stroke="#fbf9f5" stroke-width="1"/>
<path d="M738 57v24" stroke="#d2cabb" stroke-width="1"/><path d="M739 57v24" stroke="#fbf9f5" stroke-width="1"/>
<path d="M870 57v24" stroke="#d2cabb" stroke-width="1"/><path d="M871 57v24" stroke="#fbf9f5" stroke-width="1"/>
<path d="M971 57v24" stroke="#d2cabb" stroke-width="1"/><path d="M972 57v24" stroke="#fbf9f5" stroke-width="1"/>
<path d="M1103 57v24" stroke="#d2cabb" stroke-width="1"/><path d="M1104 57v24" stroke="#fbf9f5" stroke-width="1"/>
<path d="M1208 57v24" stroke="#d2cabb" stroke-width="1"/><path d="M1209 57v24" stroke="#fbf9f5" stroke-width="1"/>
<path d="M1294 57v24" stroke="#d2cabb" stroke-width="1"/><path d="M1295 57v24" stroke="#fbf9f5" stroke-width="1"/>
<path d="M1334 57v24" stroke="#d2cabb" stroke-width="1"/><path d="M1335 57v24" stroke="#fbf9f5" stroke-width="1"/>
<path d="M265 98v24" stroke="#d2cabb" stroke-width="1"/><path d="M266 98v24" stroke="#fbf9f5" stroke-width="1"/>
<path d="M366 98v24" stroke="#d2cabb" stroke-width="1"/><path d="M367 98v24" stroke="#fbf9f5" stroke-width="1"/>
<path d="M459 98v24" stroke="#d2cabb" stroke-width="1"/><path d="M460 98v24" stroke="#fbf9f5" stroke-width="1"/>
<path d="M560 98v24" stroke="#d2cabb" stroke-width="1"/><path d="M561 98v24" stroke="#fbf9f5" stroke-width="1"/>
<path d="M631 98v24" stroke="#d2cabb" stroke-width="1"/><path d="M632 98v24" stroke="#fbf9f5" stroke-width="1"/>
<path d="M733 98v24" stroke="#d2cabb" stroke-width="1"/><path d="M734 98v24" stroke="#fbf9f5" stroke-width="1"/>
<path d="M867 98v24" stroke="#d2cabb" stroke-width="1"/><path d="M868 98v24" stroke="#fbf9f5" stroke-width="1"/>
<path d="M936 98v24" stroke="#d2cabb" stroke-width="1"/><path d="M937 98v24" stroke="#fbf9f5" stroke-width="1"/>
<path d="M1006 98v24" stroke="#d2cabb" stroke-width="1"/><path d="M1007 98v24" stroke="#fbf9f5" stroke-width="1"/>
<path d="M1143 98v24" stroke="#d2cabb" stroke-width="1"/><path d="M1144 98v24" stroke="#fbf9f5" stroke-width="1"/>
<path d="M184.5 137v22" stroke="#d2cabb" stroke-width="1"/><path d="M185.5 137v22" stroke="#fbf9f5" stroke-width="1"/>
<path d="M285.5 137v22" stroke="#d2cabb" stroke-width="1"/><path d="M286.5 137v22" stroke="#fbf9f5" stroke-width="1"/>
<path d="M91.5 67h6l-3 3.500z" fill="#111"/>
<path d="M133.5 67h6l-3 3.500z" fill="#111"/>
<path d="M179.3 67h6l-3 3.500z" fill="#111"/>
<path d="M392.5 67h6l-3 3.500z" fill="#111"/>
<path d="M473.5 67h6l-3 3.500z" fill="#b4aea4"/>
<path d="M515.5 67h6l-3 3.500z" fill="#b4aea4"/>
<path d="M403.5 108h6l-3 3.500z" fill="#111"/>
<path d="M445.5 108h6l-3 3.500z" fill="#111"/>
<path d="M1043.5 108h6l-3 3.500z" fill="#111"/>
<path d="M1085 108h6l-3 3.500z" fill="#111"/>
<path d="M1129 108h6l-3 3.500z" fill="#111"/>
<g transform="translate(58.5 57)"><path d="M2.5 .5h19v17l-6 6h-13z" fill="url(#gPage)" stroke="#b2b2b2"/><path d="M5 4h14M5 7h14M5 10h14M5 13h14M5 16h13M5 19h10M6.5 2v20M10.5 2v20M14.5 2v20M18.5 2v16" stroke="#c7d5ec" stroke-width=".8" fill="none"/><path d="M21.500 17.500h-6v6z" fill="#fafafa" stroke="#b2b2b2"/></g>
<g transform="translate(103 57)"><path d="M4.500 10V4.500q0-1 1-1h13q1 0 1 1V10z" fill="#fcfcfc" stroke="#b8c4d4"/><path d="M2 8.500h4l1.500 2h9l1.500-2h4q1.500 0 1.300 1.500l-1.300 10q-.2 1.500-1.500 1.500h-17q-1.300 0-1.500-1.500l-1.300-10q-.2-1.500 1.300-1.500z" fill="url(#gBlue)" stroke="#4a86d8"/><path d="M5 15.500h14v4h-14z" fill="#5a96e6" stroke="#6aa4ee" stroke-width=".6"/></g>
<g transform="translate(147 57)"><rect x=".8" y=".8" width="22.400" height="22.400" rx="1.500" fill="#2c5a86" stroke="#1a3856"/><path d="M4 1.500h16v10h-16z" fill="#f4f6f8"/><path d="M6.500 15h11v8h-11z" fill="#cfd6dc"/><path d="M9 16.500h3.500v6h-3.500z" fill="#2c5a86"/><path d="M3 13h18" stroke="#4a7aa8"/><path d="M16.500 -1.200l1.600 2.700 3-.9-.6 3 2.900 1.400-2.600 1.900 1.500 2.800-3.200.1-.6 3.100-2.400-2-2.400 2-.6-3.100-3.200-.1 1.500-2.800-2.600-1.900 2.900-1.400-.6-3 3 .9z" fill="#f2a818" stroke="#d98a10" stroke-width=".5"/><circle cx="16.400" cy="5.800" r="3" fill="#fff2a8"/></g>
<g transform="translate(201 57)"><path d="M4.500 2.500h15v15l-4.500 4.500h-10.500z" fill="url(#gPage)" stroke="#b8b8b8"/><path d="M19.500 17.500h-4.500v4.500" fill="#fff" stroke="#b8b8b8"/><path d="M8.500 5q1.200-1.200 1.800.6 1 4.400 7.200 7.600 1.200 1-.4 1.200-5-.6-10.400 3.400-1.400.6-.7-1 4-5.800 2.500-11.800z" fill="none" stroke="#e03030" stroke-width="1.300"/></g>
<g transform="translate(231 57)"><path d="M6.500 1.500h11v8h-11z" fill="#fdfdfd" stroke="#aaa"/><path d="M3 8.500h18q2 0 2 2v6.500h-22v-6.500q0-2 2-2z" fill="url(#gGrey)" stroke="#777"/><path d="M4 12h16v2h-16z" fill="#4a4a4a"/><path d="M4.500 15.500h15l1.500 6.500h-18z" fill="#f6f6f6" stroke="#999"/><path d="M6 18.500h12M5.600 20.300h12.800" stroke="#bbb" stroke-width=".8"/></g>
<g transform="translate(261.5 57)"><path d="M2.500 3.500h14v18.500h-14z" fill="url(#gPage)" stroke="#bdbdbd"/><circle cx="9.500" cy="9.500" r="6" fill="url(#gLens)" stroke="#3a78c8" stroke-width="1.800"/><path d="M14 14l7.500 7.500" stroke="#8a8a8a" stroke-width="2.600" stroke-linecap="round"/><path d="M14 14l7 7" stroke="#c8c8c8" stroke-width="1" stroke-linecap="round"/></g>
<g transform="translate(301 57)"><path d="M6.500 .5l2.300.3 5 13.500-2.200 1.500z" fill="#e4e4e4" stroke="#8c8c8c" stroke-width=".8"/><path d="M17.500 .5l-2.300.3-5 13.500 2.200 1.500z" fill="#f4f4f4" stroke="#8c8c8c" stroke-width=".8"/><path d="M10.500 13.500q-2 1-4 2.200-4.500 1.800-5 4.800-.2 2.800 2.800 2.200 3.500-1 5.500-5.200l1.700-3zM5.800 17.800q1.800-.6 1 1.200-1.200 2.400-3.200 2.600-1.400 0-.4-1.700 1.100-1.500 2.600-2.100z" fill="#111" fill-rule="evenodd"/><path d="M13.500 13.500q2 1 4 2.200 4.500 1.800 5 4.800.2 2.800-2.800 2.200-3.500-1-5.500-5.200l-1.700-3zM18.200 17.800q-1.800-.6-1 1.200 1.200 2.400 3.200 2.600 1.400 0 .4-1.700-1.100-1.500-2.600-2.100z" fill="#111" fill-rule="evenodd"/></g>
<g transform="translate(332 57)"><path d="M2.500 1.500h13.500q1 0 1 1v15.500h-14.500z" fill="url(#gPage)" stroke="#b4b4b4"/><path d="M7.500 6.500h13.500q1 0 1 1v11l-4.500 4.500h-10z" fill="url(#gPage)" stroke="#b0b0b0"/><path d="M22 18.500h-4.500v4.500" fill="#fff" stroke="#b0b0b0"/></g>
<g transform="translate(362.5 57)"><path d="M2.500 3.500h14.500v19h-14.500z" fill="#5c5c5c" stroke="#3c3c3c"/><path d="M6 2h7.500v3h-7.500z" fill="#8a8a8a" stroke="#555" stroke-width=".8"/><path d="M7.500 7.500h14v11l-4.500 4.500h-9.500z" fill="url(#gPage)" stroke="#a8a8a8"/><path d="M21.500 18.500h-4.500v4.500" fill="#fff" stroke="#a8a8a8"/></g>
<g transform="translate(406 57)"><path d="M21.500 .6q1.800 1 1.600 3.200l-3.800 6-3.400-2.200 3.600-6q.8-1.200 2-1z" fill="#4a4a4a" stroke="#2c2c2c" stroke-width=".6"/><path d="M15.900 7.600l3.400 2.200-2.700 4.200-3.300-2.300z" fill="#e8e8e8" stroke="#8a8a8a" stroke-width=".7"/><path d="M13.300 11.700l3.300 2.300q-1.500 4.500-5.500 6.800-4.600 2.400-9.800 2 5.600-1.600 8-5 2-3 4-6.100z" fill="#dccf9c" stroke="#a89a62" stroke-width=".7"/></g>
<g transform="translate(443 57)"><path d="M3 4.500l1.500 7.500 7-3-2.800-1.300q5-2.500 8.700 1 3.200 3.500 1.300 8.800 4.600-5.800.3-11.500-5-5.300-12.600-.7z" fill="#dad6cf" stroke="#cfcac2" stroke-width=".6"/><path d="M8 12q3.500-.5 4.200 2.600.2 2.500-2.200 3.400 4.500.4 4.800-3.500-.3-4.400-6.800-2.500z" fill="#dedad3"/></g>
<g transform="translate(485 57)"><path d="M22.500 3.500l-2 8.500-7.500-3.500 3-1q-5.500-2.200-9 1.200-3 3.500-2.500 9.300-3.600-7.300.8-12.200 5.200-5 13.200-.6z" fill="#d4d0c9" stroke="#c9c4bc" stroke-width=".6"/><path d="M3.500 12q2-3 5-1.500-2.500 1-2.500 4.500 0 2 1 3.500-4-1.500-3.500-6.500z" fill="#d8d4cd"/></g>
<g transform="translate(535 57)"><path d="M5.500 5.500h14v17h-14z" fill="url(#gPage)" stroke="#b4b4b4"/><path d="M15 21l1-3.600 6.200-8.200 2.200 1.700-6.200 8.200z" fill="#f0b428" stroke="#7a5a10" stroke-width=".7"/><path d="M15 21l.5-1.800 1.200.9z" fill="#222"/><path d="M3.500 3q1-2.200 4-2.200t3.500 2l1.500 .2q.5-2 3.500-2t3.800 2.400l1.700 6.600q.3 3.800-3.500 4-3.600 0-4-3.500v-1.500h-3l-.2 1.800q-.6 3.400-4.200 3.200-3.700-.4-3.300-4.200z" fill="#2a2622" stroke="#111" stroke-width=".5"/><circle cx="6.800" cy="10.800" r="2.500" fill="#7a4a3a"/><circle cx="16.800" cy="10.600" r="2.500" fill="#7a4a3a"/><circle cx="6.300" cy="10.200" r="1" fill="#c9a090"/><circle cx="16.300" cy="10" r="1" fill="#c9a090"/></g>
<g transform="translate(566 57)"><text x="12.300" y="7.600" font-family="DejaVu Sans, sans-serif" font-size="9.300" text-anchor="middle" fill="#2a2a2a" letter-spacing="-.2">ABC</text><path d="M4.500 15.500l2.700-2.500 3.600 3.600 9.500-7.600 2.700 2.700-12.200 10.300z" fill="url(#gGreen)" stroke="#2a7a18" stroke-width=".8"/></g>
<g transform="translate(607.5 57)"><rect x=".7" y="2.700" width="22.600" height="19.600" fill="#e3e9f2" stroke="#858585" stroke-width="1.200"/><path d="M1 7.500h22M1 11.300h22M1 15h22M1 18.700h22M6.500 3v19M12 3v19M17.500 3v19" stroke="#a4a8b0" stroke-width=".9" fill="none"/><path d="M1.400 3.400h21.200v3.600h-21.200z" fill="#2ec800"/><rect x="2" y="3.900" width="3.800" height="2.600" fill="#7dff30"/><rect x="7.4" y="3.900" width="3.800" height="2.600" fill="#7dff30"/><rect x="12.9" y="3.900" width="3.800" height="2.600" fill="#7dff30"/><rect x="18.4" y="3.900" width="3.800" height="2.600" fill="#7dff30"/></g>
<g transform="translate(643 57)"><rect x=".7" y="2.700" width="22.600" height="19.600" fill="#e3e9f2" stroke="#858585" stroke-width="1.200"/><path d="M1 7.500h22M1 11.300h22M1 15h22M1 18.700h22M6.500 3v19M12 3v19M17.500 3v19" stroke="#a4a8b0" stroke-width=".9" fill="none"/><path d="M1.400 3.400h5v18.200h-5z" fill="#2ec800"/><rect x="2" y="3.9" width="3.800" height="2.500" fill="#7dff30"/><rect x="2" y="8" width="3.800" height="2.500" fill="#7dff30"/><rect x="2" y="11.9" width="3.800" height="2.500" fill="#7dff30"/><rect x="2" y="15.5" width="3.800" height="2.500" fill="#7dff30"/><rect x="2" y="19" width="3.800" height="2.500" fill="#7dff30"/></g>
<g transform="translate(675 57)"><path d="M1 7.500h17v11h-17z" fill="#f3f3f3"/><path d="M1 11h17v4h-17z" fill="#f4b8b8"/><path d="M1 11h17M1 15h17" stroke="#d83030" stroke-width="1"/><path d="M2 14.500l3-3M5 14.500l3-3M8 14.500l3-3M11 14.500l3-3M14 14.500l3-3" stroke="#d85050" stroke-width=".7"/><path d="M1 7.500h16M1 18.500h17" stroke="#666" stroke-width="1"/><path d="M5 7.500v11M9.500 7.500v11M14 7.500v11" stroke="#ccc" stroke-width=".8"/><path d="M15.500 3l5 5M20.500 3l-5 5" stroke="#c81818" stroke-width="1.800"/></g>
<g transform="translate(706 57)"><path d="M2.500 7.500h17v11h-17z" fill="#f3f3f3"/><path d="M8 5.500h4.500v15h-4.500z" fill="#f6bcbc"/><path d="M8 5v16M12.500 5v16" stroke="#d83030" stroke-width="1"/><path d="M8.500 9.500l3.500-3M8.500 12.500l3.500-3M8.500 15.500l3.500-3M8.500 18.500l3.500-3" stroke="#d85050" stroke-width=".7"/><path d="M2.500 6v14M19.500 8v12" stroke="#555" stroke-width="1"/><path d="M5.500 7.500v11M16 7.500v11" stroke="#999" stroke-width=".9"/><path d="M2.500 11h17M2.500 15h17" stroke="#bbb" stroke-width=".8"/><path d="M16.500 2l5 5M21.500 2l-5 5" stroke="#c81818" stroke-width="1.800"/></g>
<g transform="translate(746 57)"><path d="M1.500 2.500h15.500v19h-15.500z" fill="#f0f3f8" stroke="#b4bccb"/><path d="M4 6.500h3M8.500 6.500h5M4 10.500h3M8.500 10.500h5M4 14.500h3M8.500 14.500h5M4 18.500h3M8.500 18.500h5" stroke="#a4a8b4" stroke-width="1.100"/><path d="M19 2.500l3.500 5h-2.300v9h2.300l-3.500 5-3.500-5h2.300v-9h-2.300z" fill="#8ec0f4" stroke="#2a66b8" stroke-width=".9"/></g>
<g transform="translate(777 57)"><path d="M1.500 2.500h15.500v19h-15.500z" fill="#f0f3f8" stroke="#b4bccb"/><path d="M4 6.500h3M8.500 6.500h5M4 10.500h3M8.500 10.500h5M4 14.500h3M8.500 14.500h5M4 18.500h3M8.500 18.500h5" stroke="#a4a8b4" stroke-width="1.100"/><path d="M17.800 2.500h2.400v14h2.300l-3.500 5-3.500-5h2.300z" fill="#8ec0f4" stroke="#2a66b8" stroke-width=".9"/></g>
<g transform="translate(808 57)"><path d="M1.500 2.500h15.500v19h-15.500z" fill="#f0f3f8" stroke="#b4bccb"/><path d="M4 6.500h3M8.500 6.500h5M4 10.500h3M8.500 10.500h5M4 14.500h3M8.500 14.500h5M4 18.500h3M8.500 18.500h5" stroke="#a4a8b4" stroke-width="1.100"/><path d="M17.800 21.500h2.400v-14h2.300l-3.500-5-3.500 5h2.300z" fill="#8ec0f4" stroke="#2a66b8" stroke-width=".9"/></g>
<g transform="translate(839 57)"><path d="M1.500 4q0-2.500 8-2.500t8 2.500l-5.500 9v8.500q-2.500 1.200-5 0V13z" fill="#ececec" stroke="#9a9a9a" stroke-width=".9"/><ellipse cx="9.500" cy="4" rx="7" ry="2" fill="#3a3a3a"/><path d="M6 3.500q3-1.500 7 0" stroke="#e8d860" stroke-width="1" fill="none"/><path d="M15.500 8l7 14.500" stroke="#777" stroke-width="1.600"/><path d="M16 .5l1.600 3.300 3.700.4-2.700 2.500.8 3.600-3.400-1.800-3.300 1.800.7-3.600-2.700-2.500 3.700-.4z" fill="#f8e040" stroke="#d8b818" stroke-width=".6"/></g>
<g transform="translate(877 57)"><rect x="1.500" y="3.500" width="19" height="14" fill="#fdfdfd" stroke="#a8a8a8"/><rect x="3" y="5" width="16" height="11" fill="url(#gSun)"/><ellipse cx="10" cy="10.300" rx="4" ry="1.200" fill="#ffd84a"/><path d="M14.500 13.500h3v-3h3.500v3h3v3.500h-3v3h-3.500v-3h-3z" fill="#56c82a" stroke="#2a8a10" stroke-width=".8"/></g>
<g transform="translate(909 57)"><path d="M12.300 12L2.700 12A9.600 9.600 0 0 1 18.200 4.400z" fill="#3aa030" stroke="#2a7a20" stroke-width=".5"/><path d="M4 9q5-6 12-4.500" stroke="#8ad070" stroke-width="1.200" fill="none" opacity=".7"/><path d="M13.900 12L19.400 5.400A8.600 8.600 0 0 1 19.400 18.600z" fill="#f08a28" stroke="#c86a10" stroke-width=".5"/><path d="M15.500 12l4-4.500q2 2 2.300 4.500z" fill="#f8c890" opacity=".75"/><path d="M12.200 13.300L18.100 20.900A9.600 9.600 0 0 1 2.600 13.300z" fill="#3a6aa8" stroke="#2a4a80" stroke-width=".5"/><path d="M3.500 16.500q6 1 13 3" stroke="#a8c4e8" stroke-width="1.100" fill="none" opacity=".55"/></g>
<g transform="translate(940 57)"><rect x="1.200" y="2.200" width="21.600" height="17.600" rx="1" fill="#1a4ab8" stroke="#10204a" stroke-width="1.300"/><path d="M2 3h20v6q-10 1-20 5z" fill="#5a9af0" opacity=".8"/><rect x="7.500" y="6.500" width="13" height="11" fill="#eef2f8" stroke="#9ab"/><path d="M7.500 10h13M7.500 14h13M12 6.500v11M16.500 6.500v11" stroke="#b4c0d0" stroke-width=".7"/><path d="M19.500 8q1.500 6-5 7.500v-2.300l-4.500 3.800 4.500 3.500v-2.200q8-1.300 7.800-10.300z" fill="#4ac828" stroke="#2a8a10" stroke-width=".6"/></g>
<g transform="translate(979 57)"><path d="M2.500 7.500q1.500-4.500 5-4.500h15v3.200h-4v11q0 2.300 1.800 2.300 1 0 1.700-.8l.6 1.300q-1.500 2.200-4 2.200-3.600 0-3.600-4v-12h-4.800q-.2 8-1.300 12.800-.8 3.200-3.300 3.200-2.400 0-2.400-2.200 0-1.600 1.500-1.600 1.200 0 1.400 1.200.9-.5 1.200-3 .7-4.800.9-10.400h-1.300q-2 0-3 1.800z" fill="#111"/></g>
<g transform="translate(1009 57)"><path d="M3 19.500q-2.500-2.500 0-5.500l9-9.500q2.800-2.800 5.400-.6 2 2.400-.4 5.200l-8.500 9q-3 3-5.500 1.400zM5 17.500q1 1 2.500-.5l8.500-9q1.200-1.500.2-2.400-1-.8-2.300.5l-9 9.400q-1 1.200.1 2z" fill="#c9c9c9" stroke="#8c8c8c" stroke-width=".7" fill-rule="evenodd"/><path d="M8 14.500l8-8.500" stroke="#8c8c8c" stroke-width="1.600"/><path d="M13 14.500h3.500v-3.500h4v3.500h3.500v4h-3.500v3.500h-4v-3.500h-3.500z" fill="#4ec028" stroke="#2a8a10" stroke-width=".8"/></g>
<g transform="translate(1040 57)"><path d="M14.500 2.500l8 6.500-6.500 9-8-6.500z" fill="#f6e44a" stroke="#c8b018" stroke-width=".9"/><rect x="1.500" y="9.500" width="11.500" height="12" fill="#f4e03a" stroke="#c8b018" stroke-width=".9"/><path d="M2 10h10.500v3h-10.500z" fill="#fbf08a"/></g>
<g transform="translate(1072 57)"><rect x="3.500" y="1.500" width="17" height="21" fill="url(#gPage)" stroke="#b4b4c0"/><rect x="5" y="3" width="14" height="4.500" fill="#a9a4e0"/><rect x="5" y="16.500" width="14" height="4.500" fill="#a9a4e0"/><path d="M5 4.500h14M5 18h14" stroke="#cfcaf4" stroke-width="1"/></g>
<g transform="translate(1110 57)"><rect x="1.500" y="6.500" width="21" height="16" fill="#f4f4f8" stroke="#111" stroke-width="1.400"/><path d="M2 14h20M2 18h20M8 13v9M13.500 13v9M18.500 13v9" stroke="#b8b4e4" stroke-width="1.200"/><path d="M2.500 18.500h19v3.500h-19z" fill="#a9a4e0" opacity=".7"/><path d="M7 1.500h8v6h-8z" fill="#fafafa" stroke="#aaa"/><path d="M4.500 7.500h13.500q1.500 0 1.500 1.500v4h-16.500v-4q0-1.500 1.500-1.500z" fill="#4a8ad8" stroke="#2a5aa0" stroke-width=".8"/><path d="M5.500 12.500h12l1 3.500h-14z" fill="#f4f4f4" stroke="#e04040" stroke-width=".7"/></g>
<g transform="translate(1143 57)"><rect x="1.700" y="1.700" width="20.600" height="19.600" fill="#fff" stroke="#555" stroke-width="1.400"/><path d="M2.500 2.500h19v4.500h-19zM2.500 7h5.500v13.500h-5.500z" fill="#dce4f0"/><path d="M3 6l3-3M6.500 6.500l3.500-3.500M11 6.500l3.500-3.500M15.500 6.500l3.500-3.500M3 11l4-4M3 15l4.500-4.500M3 19l4.500-4.500M5 20.500l3-3" stroke="#9ab0cc" stroke-width=".9"/><path d="M8 2v19M15 2v19M2 7h20M2 12h20M2 16.500h20" stroke="#888" stroke-width=".9"/><rect x="8.500" y="7.500" width="6" height="4" fill="#7aa8e0"/></g>
<g transform="translate(1176 57)"><rect x="1.500" y="2.500" width="21" height="19" rx="1" fill="#f4f4f4" stroke="#8a96a8"/><path d="M2 3h20v3.500h-20z" fill="#2a5aa8"/><path d="M2 12.500h20v8.500h-20z" fill="#e2e2e2"/><path d="M1.500 12h21" stroke="#f08018" stroke-width="1.300" stroke-dasharray="2.400 1.200"/></g>
<g transform="translate(1216 57)"><path d="M2.500 2q5.500 1.500 7 8 1 5-1.500 9 2.500 3 5 1.500 1.500-5-1-11-3-6-9.500-7.500z" fill="#b4560c" stroke="#7a3a08" stroke-width=".5"/><path d="M4 3q4 2 5 7" stroke="#e89a4a" stroke-width="1" fill="none"/><path d="M19.500 1.500q1.500-.8 2.800.5l-7.800 16.500-3.200 2 .2-3.800z" fill="#f8d428" stroke="#c89a10" stroke-width=".7"/><path d="M11.300 20.500l.1-1.800 1.500.9z" fill="#333"/></g>
<g transform="translate(1262 57)"><rect x="1" y="2.500" width="22" height="19" rx="3" fill="url(#gWin)" stroke="#9aa6b8" stroke-width="1.200"/><path d="M3.500 3.500h17q1.500 0 1.500 2h-20q0-2 1.500-2z" fill="#3a86ea"/></g>
<g transform="translate(1302 57)"><path d="M2.500 7.500q1.500-4.500 5-4.500h15v3.200h-4v11q0 2.300 1.800 2.300 1 0 1.700-.8l.6 1.300q-1.500 2.200-4 2.200-3.600 0-3.600-4v-12h-4.800q-.2 8-1.300 12.800-.8 3.200-3.300 3.200-2.400 0-2.400-2.200 0-1.600 1.500-1.600 1.200 0 1.400 1.200.9-.5 1.200-3 .7-4.800.9-10.400h-1.300q-2 0-3 1.800z" fill="#111"/></g>
<g transform="translate(1341 57)"><rect x="1.500" y="3.500" width="19" height="14" fill="#fdfdfd" stroke="#a8a8a8"/><rect x="3" y="5" width="16" height="11" fill="url(#gSun)"/><ellipse cx="10" cy="10.300" rx="4" ry="1.200" fill="#ffd84a"/><path d="M14.500 13.500h3v-3h3.500v3h3v3.500h-3v3h-3.500v-3h-3z" fill="#56c82a" stroke="#2a8a10" stroke-width=".8"/></g>
<g transform="translate(1372 57)"><path d="M7.500 8.500h15v13h-15z" fill="#2a3a2a" stroke="#111" stroke-width=".6"/><path d="M9 13h3v5h-3zM13.500 13h3v5h-3zM18 13h3v5h-3z" fill="#5a6a5a"/><path d="M7 8l14.500-5 .8 2.800-14.500 5z" fill="#3a4a3a" stroke="#111" stroke-width=".5"/><path d="M10 7l1.500 2.500M14 5.600l1.500 2.500M18 4.300l1.500 2.500" stroke="#e8e8e8" stroke-width="1.400"/><path d="M8.500 1.500v17" stroke="#2a9a10" stroke-width="1.600"/><path d="M8.500 1.500q4 1.500 3.500 5" stroke="#2a9a10" stroke-width="1.400" fill="none"/><ellipse cx="5.500" cy="19.500" rx="4" ry="2.800" fill="#3ac818" stroke="#1a7a08" stroke-width=".6"/></g>
<g transform="translate(1403 57)"><rect x="1.200" y="1.200" width="21.600" height="21.600" rx="1.500" fill="#f6f6f6" stroke="#111" stroke-width="1.500"/><path d="M4.500 11.500l1.500-1 3 8 2.500-13h8" fill="none" stroke="#111" stroke-width="1.300"/><text x="16" y="19" font-family="DejaVu Serif, serif" font-size="11" text-anchor="middle" fill="#111">a</text></g>
<g transform="translate(1435 57)"><path d="M12.300 12L2.700 12A9.600 9.600 0 0 1 18.200 4.400z" fill="#3aa030" stroke="#2a7a20" stroke-width=".5"/><path d="M4 9q5-6 12-4.500" stroke="#8ad070" stroke-width="1.200" fill="none" opacity=".7"/><path d="M13.900 12L19.400 5.400A8.600 8.600 0 0 1 19.400 18.600z" fill="#f08a28" stroke="#c86a10" stroke-width=".5"/><path d="M15.500 12l4-4.500q2 2 2.300 4.500z" fill="#f8c890" opacity=".75"/><path d="M12.200 13.300L18.100 20.900A9.600 9.600 0 0 1 2.600 13.300z" fill="#3a6aa8" stroke="#2a4a80" stroke-width=".5"/><path d="M3.500 16.500q6 1 13 3" stroke="#a8c4e8" stroke-width="1.100" fill="none" opacity=".55"/></g>
<g transform="translate(1468 57)"><path d="M5.500 1.500h12l4 4v17h-16z" fill="url(#gPage)" stroke="#222" stroke-width="1.200"/><path d="M17.500 1.500v4h4" fill="#fff" stroke="#222" stroke-width="1"/><rect x="5" y="6.500" width="11" height="8" rx="1.500" fill="#d8d4a8" stroke="#222" stroke-width="1.200"/><path d="M1 10.500h4M16 10.500h4" stroke="#222" stroke-width="3.200"/><path d="M1.500 10.500h3.500M16 10.500h3.500" stroke="#d8d4a8" stroke-width="1.200"/><rect x="8.500" y="16" width="15" height="7" fill="#2a4a80"/><text x="16" y="22" font-family="DejaVu Sans, sans-serif" font-size="6.500" font-weight="bold" text-anchor="middle" fill="#fff">OLE</text></g>
<g transform="translate(272.5 98)"><text x="12" y="21" font-family="DejaVu Serif, Liberation Serif, serif" font-size="23.500" font-weight="bold" text-anchor="middle" fill="#f1f1f1" stroke="#858585" stroke-width="1.100">B</text></g>
<g transform="translate(304 98)"><text x="12" y="21" font-family="DejaVu Serif, Liberation Serif, serif" font-size="23.500" font-style="italic" font-weight="bold" text-anchor="middle" fill="#f4f4f4" stroke="#858585" stroke-width="1.100">i</text></g>
<g transform="translate(335 98)"><path d="M5.500 2v10.500q0 6 6.500 6t6.500-6V2h-2.600v10.500q0 3.500-3.900 3.500t-3.900-3.500V2z" fill="#f4f4f4" stroke="#8e8e8e" stroke-width="1"/><rect x="4.500" y="20.500" width="15" height="2" rx="1" fill="#f4f4f4" stroke="#8e8e8e" stroke-width=".9"/></g>
<g transform="translate(374.5 98)"><circle cx="3.0" cy="14.8" r="1.900" fill="#a0e060"/><circle cx="3.0" cy="10.0" r="1.900" fill="#50c860"/><circle cx="5.5" cy="5.9" r="1.900" fill="#40b8a8"/><circle cx="9.6" cy="3.5" r="1.900" fill="#4a78d8"/><circle cx="14.4" cy="3.5" r="1.900" fill="#6a5ad8"/><circle cx="18.5" cy="5.9" r="1.900" fill="#a05ac8"/><circle cx="21.0" cy="10.0" r="1.900" fill="#d060a8"/><circle cx="21.0" cy="14.8" r="1.900" fill="#e05060"/><text x="12.300" y="16.500" font-family="DejaVu Serif, serif" font-size="13.500" font-weight="bold" text-anchor="middle" fill="#1a1a1a">T</text><rect x="1.800" y="18" width="20.500" height="5" fill="#8b0000"/></g>
<g transform="translate(416.5 98)"><circle cx="3.0" cy="14.8" r="1.900" fill="#a0e060"/><circle cx="3.0" cy="10.0" r="1.900" fill="#50c860"/><circle cx="5.5" cy="5.9" r="1.900" fill="#40b8a8"/><circle cx="9.6" cy="3.5" r="1.900" fill="#4a78d8"/><circle cx="14.4" cy="3.5" r="1.900" fill="#6a5ad8"/><circle cx="18.5" cy="5.9" r="1.900" fill="#a05ac8"/><circle cx="21.0" cy="10.0" r="1.900" fill="#d060a8"/><circle cx="21.0" cy="14.8" r="1.900" fill="#e05060"/><path d="M6.500 5l7-3 2 4-7 4z" fill="#c01818"/><path d="M12 2.500l4-1.500 2 3.500-3.500 1.800z" fill="#c8c8c8" stroke="#8a8a8a" stroke-width=".5"/><path d="M7 9.500l6-2.500 7 7-5 4z" fill="#fdfdfd" stroke="#c8c0a8" stroke-width=".6"/><path d="M13 10l6.500 3.500-3 4-5-4.500z" fill="#e8c050"/><rect x="1.800" y="18" width="20.500" height="5" fill="#f4ee00"/></g>
<g transform="translate(464 98)"><rect x="3" y="3.5" width="16" height="2.600" rx="1.300" fill="#e8e6e2" stroke="#4e4a44" stroke-width="1"/><rect x="3" y="8.5" width="11" height="2.600" rx="1.300" fill="#e8e6e2" stroke="#4e4a44" stroke-width="1"/><rect x="3" y="13.5" width="7" height="2.600" rx="1.300" fill="#e8e6e2" stroke="#4e4a44" stroke-width="1"/><rect x="3" y="18.5" width="14" height="2.600" rx="1.300" fill="#e8e6e2" stroke="#4e4a44" stroke-width="1"/></g>
<g transform="translate(497 98)"><rect x="4.0" y="3.5" width="16" height="2.600" rx="1.300" fill="#e8e6e2" stroke="#4e4a44" stroke-width="1"/><rect x="6.5" y="8.5" width="11" height="2.600" rx="1.300" fill="#e8e6e2" stroke="#4e4a44" stroke-width="1"/><rect x="8.5" y="13.5" width="7" height="2.600" rx="1.300" fill="#e8e6e2" stroke="#4e4a44" stroke-width="1"/><rect x="5.5" y="18.5" width="14" height="2.600" rx="1.300" fill="#e8e6e2" stroke="#4e4a44" stroke-width="1"/></g>
<g transform="translate(530 98)"><rect x="4.5" y="3.5" width="16" height="2.600" rx="1.300" fill="#e8e6e2" stroke="#4e4a44" stroke-width="1"/><rect x="9.5" y="8.5" width="11" height="2.600" rx="1.300" fill="#e8e6e2" stroke="#4e4a44" stroke-width="1"/><rect x="13.5" y="13.5" width="7" height="2.600" rx="1.300" fill="#e8e6e2" stroke="#4e4a44" stroke-width="1"/><rect x="6.5" y="18.5" width="14" height="2.600" rx="1.300" fill="#e8e6e2" stroke="#4e4a44" stroke-width="1"/></g>
<g transform="translate(566.5 98)"><path d="M2.500 4h16M2.500 10.500h12M2.500 17h5" stroke="#3e3a34" stroke-width="2.800" stroke-linecap="round"/><path d="M2.500 4h16M2.500 10.500h12M2.500 17h5" stroke="#6a665e" stroke-width="1" stroke-linecap="round"/><path d="M17 9.500h4.500v8.500h-6v2.800l-5-3.800 5-3.800v2.800h3.500v-4.500h-2z" fill="#fbe0a8" stroke="#e8921a" stroke-width="1.200" stroke-linejoin="round"/></g>
<g transform="translate(599 98)"><path d="M2.500 4.500h19v15h-19zM2.500 8.500h19M2.500 16h19M7 4.500v4M11.500 4.500v4M16.500 4.500v4M7 16v3.500M11.500 16v3.500M16.500 16v3.500" fill="none" stroke="#d6d1c6" stroke-width="1" stroke-dasharray="1.500 .8"/><path d="M6 12.300h4.500M13.500 12.300h4.500M7.500 10.800l-1.500 1.500 1.500 1.500M16.500 10.800l1.500 1.500-1.500 1.500" fill="none" stroke="#d0cbc0" stroke-width="1"/></g>
<g transform="translate(638 98)"><rect x="1.500" y="2.500" width="19" height="17" fill="url(#gPage)" stroke="#c4c4c4"/><path d="M3 5h14M3 8.500h15.500M3 12h14" stroke="#111" stroke-width="1.400"/><path d="M17.500 21.500v-7h-2.500l4.300-5.500 4.300 5.500h-2.500v7z" fill="#2cc020" stroke="#1a9010" stroke-width=".6"/></g>
<g transform="translate(670 98)"><rect x="1.500" y="2.500" width="19" height="17" fill="url(#gPage)" stroke="#c4c4c4"/><path d="M3 8h10M3 11.500h15M3 15h12" stroke="#111" stroke-width="1.400"/><path d="M18.800 2.500l3.200 4.500h-2v7h2l-3.200 4.500-3.200-4.500h2v-7h-2z" fill="#2cc020" stroke="#1a9010" stroke-width=".6"/></g>
<g transform="translate(701 98)"><rect x="1.500" y="3.500" width="19" height="18" fill="url(#gPage)" stroke="#c4c4c4"/><path d="M3 12h13M3 15.500h15.500M3 19h14" stroke="#111" stroke-width="1.500"/><path d="M16.500 1v6h-2.500l4.300 5.500 4.300-5.500h-2.500v-6z" fill="#2cc020" stroke="#1a9010" stroke-width=".6"/></g>
<g transform="translate(739.5 98)"><rect x="1" y="1" width="22" height="22" rx="4" fill="#f2f0f4" stroke="#a4a8c6" stroke-width="1.500"/><rect x="9" y="4" width="9" height="13" rx="2" fill="#f8b428" stroke="#e09810" stroke-width=".6"/><path d="M9 7.500h9M9 11h9M9 14h9" stroke="#fbd870" stroke-width=".9"/><ellipse cx="9.500" cy="16.800" rx="5" ry="3" fill="#f8b428" stroke="#e09810" stroke-width=".6"/><ellipse cx="9.500" cy="15.800" rx="4.600" ry="2.400" fill="#fbd058"/></g>
<g transform="translate(771 98)"><rect x="1.500" y="1.500" width="21" height="21" rx="4" fill="#f6f5f7" stroke="#a8a8b8" stroke-width="1.800"/><text x="12" y="16.800" font-family="DejaVu Sans, sans-serif" font-size="12.500" font-weight="bold" text-anchor="middle" fill="#484c54">%</text></g>
<g transform="translate(802.5 98)"><text x="12" y="17.300" font-family="DejaVu Sans, sans-serif" font-size="14" font-weight="bold" text-anchor="middle" fill="#1c242c" letter-spacing="-.7">0.0</text></g>
<g transform="translate(835 98)"><rect x="2.500" y="3" width="19" height="19.500" rx="1.500" fill="#f8f8f8" stroke="#8a9a88" stroke-width="1"/><path d="M3 8.500v-3.500q0-2 2-2h14q2 0 2 2v3.500z" fill="#5ab43a"/><path d="M3.500 4.500h17" stroke="#9ae070" stroke-width="1"/><text x="12" y="18" font-family="DejaVu Sans, sans-serif" font-size="9.800" font-weight="bold" text-anchor="middle" fill="#2a343a" letter-spacing="-.4">14</text><path d="M3 21.500h18" stroke="#c0c8c0" stroke-width="1"/></g>
<g transform="translate(874 98)"><text x="2" y="14" font-family="DejaVu Sans, sans-serif" font-size="9.600" fill="#222" letter-spacing="-.6">,00</text><text x="15.200" y="14" font-family="DejaVu Sans, sans-serif" font-size="9.600" fill="#b8b8b8">0</text><path d="M13.500 17.800h2.900v-2.700h2.400v2.700h2.900v2.300h-2.900v2.700h-2.400v-2.700h-2.900z" fill="#3cb828" stroke="#2a9018" stroke-width=".4"/></g>
<g transform="translate(904 98)"><text x="3" y="14" font-family="DejaVu Sans, sans-serif" font-size="9.600" fill="#222" letter-spacing="-.6">,0</text><text x="12.300" y="14" font-family="DejaVu Sans, sans-serif" font-size="9.600" fill="#b8b8b8">0</text><path d="M12.500 18.200q3.500 1 7.500-.6" stroke="#d01828" stroke-width="2" fill="none" stroke-linecap="round"/></g>
<g transform="translate(944 98)"><rect x="6" y="2.5" width="11" height="2.400" rx="1.200" fill="#e8e6e2" stroke="#5a564e" stroke-width=".9"/><rect x="14" y="7.5" width="7" height="2.400" rx="1.200" fill="#e8e6e2" stroke="#5a564e" stroke-width=".9"/><rect x="14" y="12.5" width="6" height="2.400" rx="1.200" fill="#e8e6e2" stroke="#5a564e" stroke-width=".9"/><rect x="14" y="17.5" width="8" height="2.400" rx="1.200" fill="#e8e6e2" stroke="#5a564e" stroke-width=".9"/><path d="M2.500 6.500l9.500 6-9.500 6z" fill="#4ab82a" stroke="#2a8a10" stroke-width=".8"/></g>
<g transform="translate(975 98)"><rect x="8" y="2.5" width="10" height="2.400" rx="1.200" fill="#e8e6e2" stroke="#5a564e" stroke-width=".9"/><rect x="2" y="7.5" width="7" height="2.400" rx="1.200" fill="#e8e6e2" stroke="#5a564e" stroke-width=".9"/><rect x="2" y="12.5" width="6" height="2.400" rx="1.200" fill="#e8e6e2" stroke="#5a564e" stroke-width=".9"/><rect x="2" y="17.5" width="8" height="2.400" rx="1.200" fill="#e8e6e2" stroke="#5a564e" stroke-width=".9"/><path d="M21.500 6.500l-9.500 6 9.500 6z" fill="#e02020" stroke="#a01010" stroke-width=".8"/></g>
<g transform="translate(1013 98)"><rect x="2" y="2" width="20.500" height="20" fill="none" stroke="#111" stroke-width="2"/><path d="M12.500 2v20M2 12h20.500" stroke="#111" stroke-width="1.800"/><path d="M23.200 3v20.500h-20" stroke="#8a8a8a" stroke-width="1" fill="none" opacity=".6"/></g>
<g transform="translate(1055 98)"><path d="M2 3.500q10-2 20 0" stroke="#111" stroke-width="2.600" fill="none"/><path d="M2 9.500h20" stroke="#111" stroke-width="2.400"/><path d="M2 15.500h20" stroke="#111" stroke-width="2.200" stroke-dasharray="7.500 1.500"/><path d="M2 21h20" stroke="#111" stroke-width="1.800" stroke-dasharray="5 2"/></g>
<g transform="translate(1098 98)"><path d="M1.500 17V1.500h21" fill="none" stroke="#1a3a78" stroke-width="1.600"/><path d="M14 1.500h8.500" stroke="#c8d0e0" stroke-width="1.600"/><path d="M3 10l6-3.500 5 7.500-6.500 4z" fill="#f4f4f4" stroke="#222" stroke-width="1"/><path d="M7 5q1.500-2 2.500 0v5" stroke="#222" stroke-width="1" fill="none"/><path d="M13.500 13.500q2 1 1.500 3.500" stroke="#222" stroke-width="1" fill="none"/><rect x=".5" y="17.500" width="23.500" height="6" fill="#000080"/></g>
<g transform="translate(1151 98)"><rect x="1.500" y="1.500" width="21" height="20" rx="1" fill="#f4f4f4" stroke="#a8a8a8" stroke-width="1"/><rect x="3.500" y="3.5" width="17" height="4" fill="#f4a0a0" stroke="#d03030" stroke-width=".9"/><path d="M15.500 5.5h4" stroke="#555" stroke-width="1.200"/><rect x="3.500" y="9.7" width="17" height="4" fill="#e8e8e8" stroke="#a8a8a8" stroke-width=".9"/><path d="M15.500 11.7h4" stroke="#555" stroke-width="1.200"/><rect x="3.500" y="15.9" width="17" height="4" fill="#f4a0a0" stroke="#d03030" stroke-width=".9"/><path d="M15.500 17.9h4" stroke="#555" stroke-width="1.200"/></g>
<g transform="translate(1184 98)"><rect x="1.500" y="1.500" width="21" height="20" rx="1" fill="#f4f4f4" stroke="#a8a8a8" stroke-width="1"/><rect x="3.500" y="3.5" width="17" height="4" fill="#b4e890" stroke="#4a9a28" stroke-width=".9"/><path d="M15.500 5.5h4" stroke="#555" stroke-width="1.200"/><rect x="3.500" y="9.7" width="17" height="4" fill="#f8c880" stroke="#e08820" stroke-width=".9"/><path d="M15.500 11.7h4" stroke="#555" stroke-width="1.200"/><rect x="3.500" y="15.9" width="17" height="4" fill="#f4a0a0" stroke="#d03030" stroke-width=".9"/><path d="M15.500 17.9h4" stroke="#555" stroke-width="1.200"/></g>
<g transform="translate(1217 98)"><rect x="1.500" y="1.500" width="21" height="20" rx="1" fill="#f4f4f4" stroke="#a8a8a8" stroke-width="1"/><rect x="3.500" y="3.5" width="17" height="4" fill="#e8e8e8" stroke="#4a78b8" stroke-width=".9"/><rect x="3.500" y="3.5" width="11" height="4" fill="#a8c8f0" stroke="#4a78b8" stroke-width=".9"/><path d="M15.500 5.5h4" stroke="#555" stroke-width="1.200"/><rect x="3.500" y="9.7" width="17" height="4" fill="#e8e8e8" stroke="#4a78b8" stroke-width=".9"/><rect x="3.500" y="9.7" width="6" height="4" fill="#a8c8f0" stroke="#4a78b8" stroke-width=".9"/><path d="M15.500 11.7h4" stroke="#555" stroke-width="1.200"/><rect x="3.500" y="15.9" width="17" height="4" fill="#a8c8f0" stroke="#4a78b8" stroke-width=".9"/><path d="M15.500 17.9h4" stroke="#555" stroke-width="1.200"/></g>
<g transform="translate(1250 98)"><rect x="1.500" y="1.500" width="21" height="20" rx="1" fill="#f4f4f4" stroke="#a8a8a8"/><path d="M6 3.0l2.500 2.500-2.500 2.500-2.500-2.500z" fill="#f4b020" stroke="#c08010" stroke-width=".6"/><rect x="10.500" y="3.5" width="10" height="4" fill="#e4e4e4" stroke="#a8a8a8" stroke-width=".7"/><path d="M15.500 5.5h4" stroke="#555" stroke-width="1.200"/><path d="M6 9.2l2.500 2.500-2.500 2.500-2.500-2.500z" fill="#5ac030" stroke="#2a8a10" stroke-width=".6"/><rect x="10.500" y="9.7" width="10" height="4" fill="#e4e4e4" stroke="#a8a8a8" stroke-width=".7"/><path d="M15.500 11.7h4" stroke="#555" stroke-width="1.200"/><path d="M6 15.399999999999999l2.500 2.500-2.500 2.500-2.500-2.500z" fill="#d82838" stroke="#901018" stroke-width=".6"/><rect x="10.500" y="15.899999999999999" width="10" height="4" fill="#e4e4e4" stroke="#a8a8a8" stroke-width=".7"/><path d="M15.500 17.9h4" stroke="#555" stroke-width="1.200"/></g>
<rect x="55.5" y="100.5" width="136" height="21" rx="4.500" fill="url(#gBtn)" stroke="#a39b8b"/><path d="M171.5 101v20" stroke="#cfc7b8"/><path d="M177.7 109.2l3.800 3.800 3.800-3.800" fill="none" stroke="#111" stroke-width="2.400"/><text x="63.5" y="115" font-family="DejaVu Sans, sans-serif" font-size="12.600" letter-spacing="-.3" fill="#111">Arial</text>
<rect x="200.5" y="100.5" width="61" height="21" rx="4.500" fill="url(#gBtn)" stroke="#a39b8b"/><path d="M241.5 101v20" stroke="#cfc7b8"/><path d="M247.7 109.2l3.800 3.800 3.800-3.800" fill="none" stroke="#111" stroke-width="2.400"/><text x="209" y="115" font-family="DejaVu Sans, sans-serif" font-size="12.600" letter-spacing="-.3" fill="#111">10</text>
<rect x="44.5" y="137.5" width="136" height="21" rx="4.500" fill="url(#gBtn)" stroke="#a39b8b"/><path d="M160.5 138v20" stroke="#cfc7b8"/><path d="M166.7 146.2l3.800 3.800 3.800-3.800" fill="none" stroke="#111" stroke-width="2.400"/><text x="51" y="152" font-family="DejaVu Sans, sans-serif" font-size="12.600" letter-spacing="-.3" fill="#111">J4</text>
<rect x="290" y="136" width="1601" height="24" fill="#fdfcfa"/>
<rect x="1892.500" y="136.500" width="14" height="21" rx="3" fill="url(#gBtn)" stroke="#a39b8b"/><path d="M1896 145.500h7l-3.500 4z" fill="#111"/>
<g transform="translate(192 136)"><text x="1" y="19" font-family="DejaVu Serif, serif" font-size="15" font-style="italic" font-weight="bold" fill="#111">f</text><text x="7" y="19" font-family="DejaVu Sans, sans-serif" font-size="7.500" font-style="italic" fill="#111" letter-spacing="-.5">(x)</text><path d="M17 5.500l5.500 17" stroke="#777" stroke-width="1.500"/><path d="M19 20l3 2.500" stroke="#333" stroke-width="1.200"/><path d="M16.500 -.5l1.700 3.500 3.800.4-2.800 2.600.8 3.800-3.500-1.900-3.400 1.900.7-3.800-2.800-2.600 3.800-.4z" fill="#f8e040" stroke="#d8b818" stroke-width=".5"/><path d="M8 1l.8 1.700 1.900.2-1.400 1.300.4 1.900-1.700-1-1.700 1 .4-1.900-1.400-1.300 1.900-.2z" fill="#f8e870"/></g>
<g transform="translate(223 136)"><path d="M3.500 1.500h16l.5 5h-1.300q-.6-2.800-3.200-2.800h-7.200l6.200 7.800-6.800 8h8q2.800 0 3.800-3.300h1.400l-1 6.300h-17v-1.200l8-9.300-7.400-9.300z" fill="#222" stroke="#111" stroke-width=".4"/></g>
<g transform="translate(254 136)"><path d="M2.500 7.300q9.500-1.300 19-.3" stroke="#111" stroke-width="3.600" fill="none" stroke-linecap="round"/><path d="M2.500 16.800q9.500 .8 19-.3" stroke="#111" stroke-width="3.600" fill="none" stroke-linecap="round"/></g>
</svg>
<svg id="docksvg" width="43" height="1080" viewBox="0 0 43 1080">
<defs>
<radialGradient id="dSph" cx=".5" cy=".42" r=".6"><stop offset="0" stop-color="#dfe8f6"/><stop offset=".45" stop-color="#8aa4cc"/><stop offset=".8" stop-color="#2c4270"/><stop offset="1" stop-color="#16223c"/></radialGradient>
<linearGradient id="dFold" x1="0" y1="0" x2="0" y2="1"><stop offset="0" stop-color="#9cc4ec"/><stop offset="1" stop-color="#4a86c8"/></linearGradient>
<radialGradient id="dFx" cx=".45" cy=".4" r=".6"><stop offset="0" stop-color="#ffd23a"/><stop offset=".5" stop-color="#f58a18"/><stop offset="1" stop-color="#d8401c"/></radialGradient>
<linearGradient id="dGlow" x1="0" y1="0" x2="0" y2="1"><stop offset="0" stop-color="#2a3a50"/><stop offset="1" stop-color="#141c28"/></linearGradient>
<linearGradient id="dCan" x1="0" y1="0" x2="1" y2="0"><stop offset="0" stop-color="#4a6a98"/><stop offset=".5" stop-color="#a8c0e0"/><stop offset="1" stop-color="#4a6a98"/></linearGradient>
</defs>
<circle cx="18.500" cy="18.500" r="14.500" fill="url(#dSph)" stroke="#0e1626" stroke-width="1"/><path d="M19 7q6 7 4.500 14-1.500 5-6 5-5-1-4.500-6 1-6 6-13z" fill="#f4f7fc" opacity=".85"/>
<rect x="5" y="43" width="22" height="10" fill="#4a78b0"/><rect x="6" y="44" width="20" height="4" fill="#a8c8ec"/><path d="M16 44v9" stroke="#1a3a68" stroke-width="3"/><path d="M12 50l4 5 4-5z" fill="#3a78d0"/><rect x="4" y="54" width="13" height="8" fill="#0a0a0a" stroke="#555" stroke-width=".5"/><rect x="22" y="50" width="12" height="9" fill="#e8e8e8" stroke="#444" stroke-width=".6"/><rect x="23" y="51" width="10" height="3" fill="#888"/>
<rect x="3" y="76" width="32" height="31" rx="5" fill="url(#dGlow)" stroke="#2f86dc" stroke-width="1.600"/><rect x="2" y="75" width="34" height="33" rx="6" fill="none" stroke="#1c5aa0" stroke-width="1" opacity=".7"/>
<circle cx="19" cy="91.500" r="12.500" fill="url(#dFx)"/><circle cx="20.500" cy="89" r="7.500" fill="#2a62c8"/><path d="M14 85q5-4 11-1-4 0-5 3 3 1 3 4-3-1-5 1-3 3 0 6 4 2 8-1-3 6-10 5-8-3-8-11 1-8 6-12 0 3 0 6z" fill="#f28a1a"/><path d="M9 84q-3 6-1.500 12 2.500 7 9.500 8-6-3-7-9-1-5-1-11z" fill="#e0501c"/><circle cx="22" cy="86.500" r="2" fill="#6aa8f0" opacity=".8"/>
<rect x="3" y="115" width="32" height="32" rx="5" fill="url(#dGlow)" stroke="#2f86dc" stroke-width="1.600"/><rect x="2" y="114" width="34" height="34" rx="6" fill="none" stroke="#1c5aa0" stroke-width="1" opacity=".7"/>
<rect x="6" y="118" width="26" height="26" rx="2" fill="#cfcfcb" opacity=".9"/><path d="M6 124l16-5 10 14-17 9z" fill="#f4f0e0"/><path d="M14 120h17v16h-17z" fill="#dfe6ee" stroke="#8898a8" stroke-width=".6"/><path d="M16 123h13M16 126h13M16 129h13" stroke="#6a98d0" stroke-width="1.400"/><path d="M6 127l12 8 9-7v12l-18 4z" fill="#f0d048" stroke="#b89820" stroke-width=".6"/><path d="M7 122q0-5 4-5t4 5v4h-8z" fill="none" stroke="#c8c8c8" stroke-width="2"/><rect x="5.500" y="124" width="11" height="8" rx="1" fill="#bcbcbc" stroke="#777" stroke-width=".6"/>
<path d="M8 161q3-5 9-3 7-3 12 2 4 5 2 11 2 6-3 10-5 3-10 1-7 2-11-3-4-6 0-11-1-4 1-7z" fill="#1aa8e8"/><text x="19.500" y="179.500" font-family="DejaVu Sans, sans-serif" font-size="25" font-weight="bold" text-anchor="middle" fill="#fff">S</text>
<rect x="3" y="207" width="31" height="33" rx="5" fill="url(#dGlow)" stroke="#2f86dc" stroke-width="1.600"/><rect x="2" y="206" width="33" height="35" rx="6" fill="none" stroke="#1c5aa0" stroke-width="1" opacity=".7"/>
<path d="M8 211h14l7 7v18h-21z" fill="#fdfdfd" stroke="#2a8a2a" stroke-width="1.800"/><path d="M22 211l7 7h-7z" fill="#1a7a1a"/><path d="M24 209l6 6v-6z" fill="#28a428"/><rect x="10.500" y="221" width="16" height="12" fill="#e8f4e0" stroke="#3aa43a" stroke-width=".8"/><path d="M10.500 225h16M10.500 229h16M15.500 221v12M21 221v12" stroke="#3aa43a" stroke-width="1"/><rect x="10.500" y="221" width="16" height="3.500" fill="#4ab84a"/><rect x="21.500" y="228" width="4" height="4.500" fill="#e09030"/>
<path d="M4 683q0-2 2-2h9l3 3h14q2 0 2 2v18q0 2-2 2h-26q-2 0-2-2z" fill="#3a78c0"/><path d="M3.500 689h31v15q0 2-2 2h-27q-2 0-2-2z" fill="url(#dFold)" stroke="#7aaee4" stroke-width=".6"/>
<rect x="5" y="721" width="28" height="23" fill="#5a94d8" stroke="#9cc0ec" stroke-width="1"/><path d="M5 726h28" stroke="#c4dcf6" stroke-width="2"/><path d="M5 734.500h28M19 727v17" stroke="#2a5a98" stroke-width="1.600"/><path d="M6 728h12v6h-12z" fill="#86b4e8"/><path d="M20 735.500h12v8h-12z" fill="#3a74bc"/>
<ellipse cx="9" cy="766" rx="8.500" ry="10.500" fill="#fff"/><ellipse cx="28" cy="766" rx="8.500" ry="10.500" fill="#fff"/><circle cx="12.500" cy="768" r="2.300" fill="#000"/><circle cx="31.500" cy="768" r="2.300" fill="#000"/>
<rect x="5" y="787" width="28" height="20" rx="2" fill="#7a9cc4" stroke="#b4c8e0" stroke-width="1"/><path d="M4 805h30l-3 8h-24z" fill="#c8ccd4" stroke="#8a8e98" stroke-width=".6"/><rect x="11" y="807" width="16" height="3" fill="#4a4e58"/><circle cx="16" cy="796" r="6.500" fill="#c4c8d0" stroke="#6a6e78" stroke-width="1"/><circle cx="16" cy="796" r="2.500" fill="#5a7ea8"/><path d="M16 788v3M16 801v3M8 796h3M21 796h3M10.500 790.500l2 2M19.500 799.500l2 2M10.500 801.500l2-2M19.500 792.500l2-2" stroke="#6a6e78" stroke-width="1.800"/><path d="M25 790l5 3-2 8-4-2z" fill="#4a6e9c"/>
<rect x="4" y="823" width="22" height="28" rx="1.500" fill="#e8e8e8" stroke="#9a9a9a" stroke-width=".8"/><rect x="10" y="820" width="10" height="5" rx="1" fill="#b4b4b4" stroke="#777" stroke-width=".6"/><path d="M13 829h22v19l-6 6h-16z" fill="#fdfdfd" stroke="#9a9a9a" stroke-width=".8"/><path d="M35 848h-6v6" fill="#e4e4e4" stroke="#9a9a9a" stroke-width=".8"/>
<circle cx="18.500" cy="872.500" r="12.300" fill="#1a6ac8"/><circle cx="18.500" cy="872.500" r="12.300" fill="none" stroke="#0e4a98" stroke-width="1"/><text x="18.500" y="878" font-family="Liberation Sans, sans-serif" font-size="15.500" font-style="italic" font-weight="bold" text-anchor="middle" fill="#fff" letter-spacing="-1">hp</text>
<rect x="8" y="893" width="22" height="18" rx="1.500" fill="#c87a18" stroke="#8a4a08" stroke-width=".8"/><rect x="10" y="896" width="18" height="11" fill="#3a5a98"/><text x="19" y="906" font-family="DejaVu Sans, sans-serif" font-size="11" font-weight="bold" text-anchor="middle" fill="#f8e060" letter-spacing="-.5">10</text><path d="M15 893q4-6 8 0z" fill="#f0c030"/>
<path d="M12.500 919.500l8.500 12M24.500 919.500l-8.500 12" stroke="#f0f0f0" stroke-width="2.200" stroke-linecap="round"/><circle cx="13.500" cy="934" r="3" fill="none" stroke="#f0f0f0" stroke-width="2"/><circle cx="23.500" cy="934" r="3" fill="none" stroke="#f0f0f0" stroke-width="2"/>
<path d="M8 953.500h4.500l5.500-5v18l-5.500-5h-4.500z" fill="#f0f0f0"/><path d="M20.500 952.500q3 5 0 10M23.500 950q5 7.500 0 15M26.500 947.500q7 10 0 20" fill="none" stroke="#f0f0f0" stroke-width="1.700" stroke-linecap="round"/>
<rect x="13.500" y="976.500" width="11" height="8.500" rx="1" fill="none" stroke="#e8e8e8" stroke-width="2"/><path d="M19 985.500v6M9 991.500h20" stroke="#e8e8e8" stroke-width="2"/><rect x="16" y="989" width="6" height="5" fill="#e8e8e8"/>
<path d="M17.500 1006l4 3.500-4 3.500z" fill="#d8d8d8"/>
<text x="-.5" y="1036.500" font-family="DejaVu Sans, sans-serif" font-size="14.300" fill="#cfcfcf" letter-spacing="-.7">11:36</text>
<path d="M9 1051h19l-2.500 23h-14z" fill="url(#dCan)" stroke="#2a4470" stroke-width=".7"/><ellipse cx="18.500" cy="1050.500" rx="10" ry="3.200" fill="#c8d8ec" stroke="#5a7aa8" stroke-width=".8"/><ellipse cx="18.500" cy="1050.500" rx="7" ry="1.800" fill="#3a5480"/><path d="M13 1055l1.500 17M18.500 1055.500v17M24 1055l-1.500 17" stroke="#34507e" stroke-width="1.200"/>
</svg>
</body></html>
